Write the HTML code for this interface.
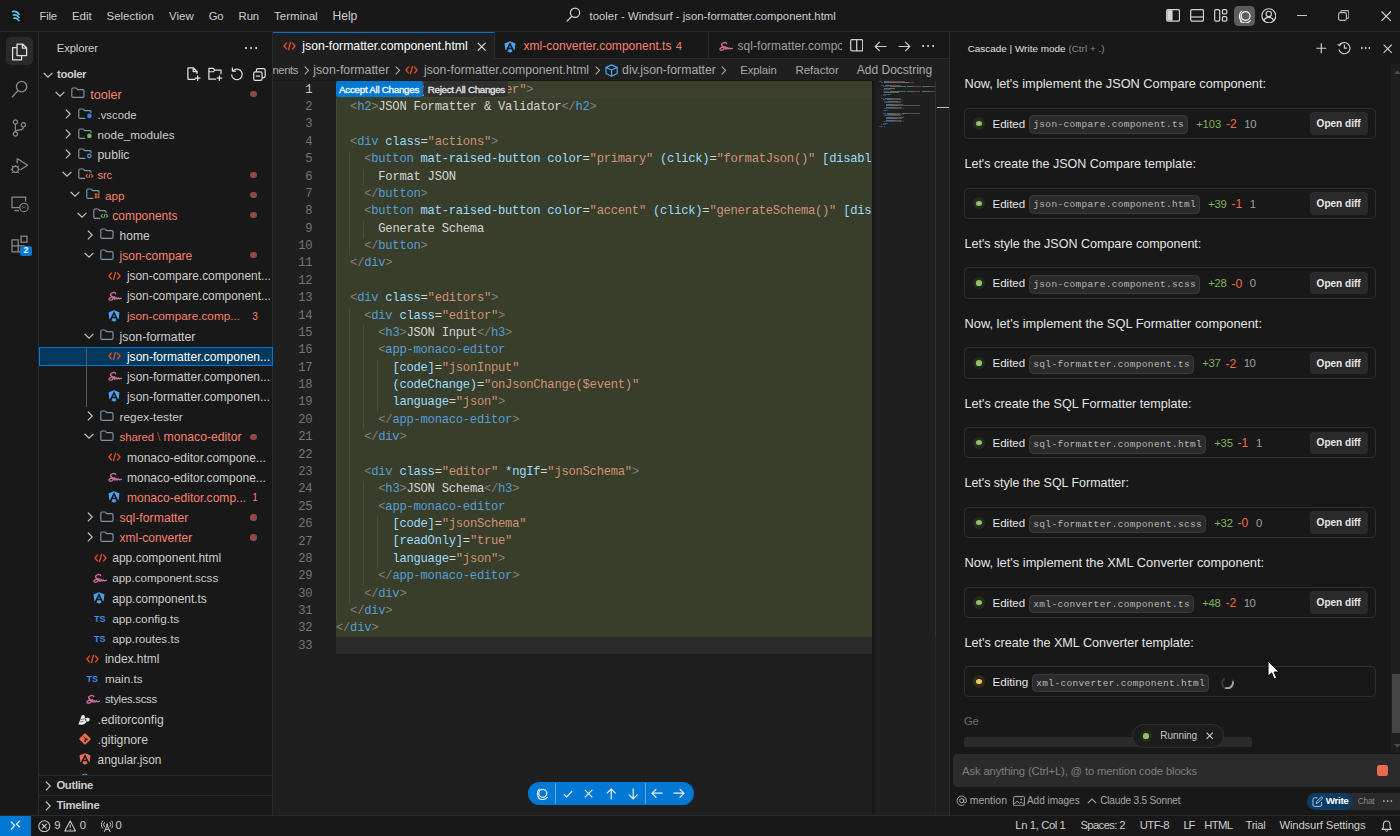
<!DOCTYPE html>
<html lang="en"><head><meta charset="utf-8"><title>tooler - Windsurf - json-formatter.component.html</title>
<style>
html,body{margin:0;padding:0;background:#181818;overflow:hidden}
body{width:1400px;height:836px;position:relative;font-family:"Liberation Sans", sans-serif;font-size:11.9px;color:#ccc}
#app{position:absolute;left:0;top:0;width:1400px;height:836px;overflow:hidden;background:#181818}
#app div,#app span,#app svg{position:absolute;box-sizing:border-box}
#app span{white-space:pre}
#app span span{position:static}
</style></head><body><div id="app">
<section class="workbench-frame" aria-label="Workbench">
<div style="left:0px;top:0px;width:1400px;height:31px;background:#181818;"></div>
<div style="left:0px;top:31px;width:1400px;height:1px;background:#2b2b2b;"></div>
<div style="left:0px;top:32px;width:38px;height:783px;background:#181818;"></div>
<div style="left:38px;top:32px;width:1px;height:783px;background:#2b2b2b;"></div>
<div style="left:39px;top:32px;width:233px;height:783px;background:#181818;"></div>
<div style="left:272px;top:32px;width:1px;height:783px;background:#2b2b2b;"></div>
<div style="left:273px;top:32px;width:676px;height:27px;background:#181818;"></div>
<div style="left:273px;top:58px;width:676px;height:1px;background:#2b2b2b;"></div>
<div style="left:273px;top:59px;width:676px;height:756px;background:#1f1f1f;"></div>
<div style="left:949px;top:32px;width:1px;height:783px;background:#2b2b2b;"></div>
<div style="left:950px;top:32px;width:450px;height:783px;background:#181818;"></div>
<div style="left:0px;top:815px;width:1400px;height:1px;background:#2b2b2b;"></div>
<div style="left:0px;top:816px;width:1400px;height:20px;background:#181818;"></div>
</section>
<header class="titlebar menubar" aria-label="Title bar">
<span style='left:39.6px;top:8px;font-size:11.3px;line-height:16px;color:#cccccc;letter-spacing:-0.253px;'>File</span>
<span style='left:71.9px;top:8px;font-size:11.49px;line-height:16px;color:#cccccc;'>Edit</span>
<span style='left:106.5px;top:8px;font-size:11.51px;line-height:16px;color:#cccccc;'>Selection</span>
<span style='left:169.1px;top:8px;font-size:11.45px;line-height:16px;color:#cccccc;'>View</span>
<span style='left:208.8px;top:8px;font-size:11.3px;line-height:16px;color:#cccccc;letter-spacing:-0.291px;'>Go</span>
<span style='left:238.6px;top:8px;font-size:11.3px;line-height:16px;color:#cccccc;letter-spacing:-0.112px;'>Run</span>
<span style='left:274px;top:8px;font-size:11.57px;line-height:16px;color:#cccccc;'>Terminal</span>
<span style='left:332.5px;top:8px;font-size:12.06px;line-height:16px;color:#cccccc;'>Help</span>
<span style='left:589.6px;top:8px;font-size:11.33px;line-height:16px;color:#cccccc;'>tooler - Windsurf - json-formatter.component.html</span>
</header>
<aside class="sidebar explorer" aria-label="Explorer">
<span style='left:56.8px;top:40px;font-size:11.3px;line-height:16px;color:#cccccc;letter-spacing:-0.133px;'>Explorer</span>
<svg style="left:245.2px;top:46.4px;" width="12.199999999999989" height="4" viewBox="0 0 12.199999999999989 4"><circle cx="1.05" cy="2" r="1.05" fill="#e0e0e0"/><circle cx="6.099999999999994" cy="2" r="1.05" fill="#e0e0e0"/><circle cx="11.149999999999988" cy="2" r="1.05" fill="#e0e0e0"/></svg>
<svg style="left:42.6px;top:71.6px;" width="10.0" height="6.4" viewBox="0 0 10 6.4"><path d="M1 1.2 L5 5.2 L9 1.2" fill="none" stroke="#c5c5c5" stroke-width="1.15" stroke-linecap="square"/></svg>
<span style='left:57.1px;top:66px;font-size:11.3px;line-height:16px;color:#cccccc;font-weight:700;letter-spacing:-0.397px;'>tooler</span>
<div style="left:39px;top:346.5px;width:233.6px;height:19.8px;background:#04395e;border:1px solid #0078d4;"></div>
<div style="left:86.4px;top:346.5px;width:1px;height:60.465px;background:#585858;"></div>
<svg style="left:55.0px;top:90.7px;" width="10.0" height="6.4" viewBox="0 0 10 6.4"><path d="M1 1.2 L5 5.2 L9 1.2" fill="none" stroke="#c5c5c5" stroke-width="1.15" stroke-linecap="square"/></svg>
<svg style="left:71.0px;top:87.4px;" width="16" height="13" viewBox="0 0 16 13"><path d="M2 1 H4.8 Q5.4 1 5.8 1.5 L6.6 2.6 H11.8 Q13 2.6 13 3.8 V9.2 Q13 10.4 11.8 10.4 H2 Q0.8 10.4 0.8 9.2 V2.2 Q0.8 1 2 1 Z" fill="none" stroke="#7c94a8" stroke-width="1.15" stroke-linejoin="round"/></svg>
<span style='left:90.2px;top:87px;font-size:12.64px;line-height:16px;color:#f88070;'>tooler</span>
<div style="left:250.2px;top:90.9px;width:6.4px;height:6.4px;border-radius:50%;background:#8d4a43"></div>
<svg style="left:64.64999999999999px;top:109.055px;" width="6.4" height="10.0" viewBox="0 0 6.4 10"><path d="M1.2 1 L5.2 5 L1.2 9" fill="none" stroke="#c5c5c5" stroke-width="1.15" stroke-linecap="square"/></svg>
<svg style="left:78.35px;top:107.555px;" width="16" height="13" viewBox="0 0 16 13"><path d="M6.8 10.4 H2 Q0.8 10.4 0.8 9.2 V2.2 Q0.8 1 2 1 H4.8 Q5.4 1 5.8 1.5 L6.6 2.6 H11.8 Q13 2.6 13 3.8 V4.6" fill="none" stroke="#7c94a8" stroke-width="1.15" stroke-linejoin="round" stroke-linecap="round"/><circle cx="11.4" cy="7.9" r="2.3" fill="#2f7fe8"/></svg>
<span style='left:97.55px;top:107px;font-size:11.31px;line-height:16px;color:#cccccc;'>.vscode</span>
<svg style="left:64.64999999999999px;top:129.21px;" width="6.4" height="10.0" viewBox="0 0 6.4 10"><path d="M1.2 1 L5.2 5 L1.2 9" fill="none" stroke="#c5c5c5" stroke-width="1.15" stroke-linecap="square"/></svg>
<svg style="left:78.35px;top:127.71000000000001px;" width="16" height="13" viewBox="0 0 16 13"><path d="M6.8 10.4 H2 Q0.8 10.4 0.8 9.2 V2.2 Q0.8 1 2 1 H4.8 Q5.4 1 5.8 1.5 L6.6 2.6 H11.8 Q13 2.6 13 3.8 V4.6" fill="none" stroke="#7c94a8" stroke-width="1.15" stroke-linejoin="round" stroke-linecap="round"/><circle cx="11.4" cy="7.9" r="2.3" fill="#6db35a"/></svg>
<span style='left:97.55px;top:127px;font-size:11.74px;line-height:16px;color:#cccccc;'>node_modules</span>
<svg style="left:64.64999999999999px;top:149.365px;" width="6.4" height="10.0" viewBox="0 0 6.4 10"><path d="M1.2 1 L5.2 5 L1.2 9" fill="none" stroke="#c5c5c5" stroke-width="1.15" stroke-linecap="square"/></svg>
<svg style="left:78.35px;top:147.865px;" width="16" height="13" viewBox="0 0 16 13"><path d="M6.8 10.4 H2 Q0.8 10.4 0.8 9.2 V2.2 Q0.8 1 2 1 H4.8 Q5.4 1 5.8 1.5 L6.6 2.6 H11.8 Q13 2.6 13 3.8 V4.6" fill="none" stroke="#7c94a8" stroke-width="1.15" stroke-linejoin="round" stroke-linecap="round"/><circle cx="11.4" cy="7.9" r="1.7" fill="none" stroke="#5b8df0" stroke-width="1.2"/></svg>
<span style='left:97.55px;top:147px;font-size:12.23px;line-height:16px;color:#cccccc;'>public</span>
<svg style="left:62.349999999999994px;top:171.32000000000002px;" width="10.0" height="6.4" viewBox="0 0 10 6.4"><path d="M1 1.2 L5 5.2 L9 1.2" fill="none" stroke="#c5c5c5" stroke-width="1.15" stroke-linecap="square"/></svg>
<svg style="left:78.35px;top:168.02px;" width="16" height="13" viewBox="0 0 16 13"><path d="M6.8 10.4 H2 Q0.8 10.4 0.8 9.2 V2.2 Q0.8 1 2 1 H4.8 Q5.4 1 5.8 1.5 L6.6 2.6 H11.8 Q13 2.6 13 3.8 V4.6" fill="none" stroke="#7c94a8" stroke-width="1.15" stroke-linejoin="round" stroke-linecap="round"/><path d="M9.6 6.2 L8.1 7.9 L9.6 9.6 M10.9 10 L11.9 5.8 M13.2 6.2 L14.7 7.9 L13.2 9.6" fill="none" stroke="#e8683a" stroke-width="1.05"/></svg>
<span style='left:97.55px;top:167px;font-size:11.3px;line-height:16px;color:#f88070;letter-spacing:-0.205px;'>src</span>
<div style="left:250.2px;top:171.5px;width:6.4px;height:6.4px;border-radius:50%;background:#8d4a43"></div>
<svg style="left:69.7px;top:191.47500000000002px;" width="10.0" height="6.4" viewBox="0 0 10 6.4"><path d="M1 1.2 L5 5.2 L9 1.2" fill="none" stroke="#c5c5c5" stroke-width="1.15" stroke-linecap="square"/></svg>
<svg style="left:85.7px;top:188.175px;" width="16" height="13" viewBox="0 0 16 13"><path d="M6.8 10.4 H2 Q0.8 10.4 0.8 9.2 V2.2 Q0.8 1 2 1 H4.8 Q5.4 1 5.8 1.5 L6.6 2.6 H11.8 Q13 2.6 13 3.8 V4.6" fill="none" stroke="#7c94a8" stroke-width="1.15" stroke-linejoin="round" stroke-linecap="round"/><rect x="8.8" y="5.5" width="2" height="2" fill="#e8683a"/><rect x="11.5" y="5.5" width="2" height="2" fill="#e8683a"/><rect x="8.8" y="8.2" width="2" height="2" fill="#e8683a"/><rect x="11.5" y="8.2" width="2" height="2" fill="#e8683a"/></svg>
<span style='left:104.9px;top:188px;font-size:11.75px;line-height:16px;color:#f88070;'>app</span>
<div style="left:250.2px;top:191.7px;width:6.4px;height:6.4px;border-radius:50%;background:#8d4a43"></div>
<svg style="left:77.05px;top:211.63000000000002px;" width="10.0" height="6.4" viewBox="0 0 10 6.4"><path d="M1 1.2 L5 5.2 L9 1.2" fill="none" stroke="#c5c5c5" stroke-width="1.15" stroke-linecap="square"/></svg>
<svg style="left:93.05px;top:208.33px;" width="16" height="13" viewBox="0 0 16 13"><path d="M6.8 10.4 H2 Q0.8 10.4 0.8 9.2 V2.2 Q0.8 1 2 1 H4.8 Q5.4 1 5.8 1.5 L6.6 2.6 H11.8 Q13 2.6 13 3.8 V4.6" fill="none" stroke="#7c94a8" stroke-width="1.15" stroke-linejoin="round" stroke-linecap="round"/><path d="M9.6 6.2 L8.1 7.9 L9.6 9.6 M10.9 10 L11.9 5.8 M13.2 6.2 L14.7 7.9 L13.2 9.6" fill="none" stroke="#6db35a" stroke-width="1.05"/></svg>
<span style='left:112.25px;top:208px;font-size:12.0px;line-height:16px;color:#f88070;'>components</span>
<div style="left:250.2px;top:211.8px;width:6.4px;height:6.4px;border-radius:50%;background:#8d4a43"></div>
<svg style="left:86.7px;top:229.985px;" width="6.4" height="10.0" viewBox="0 0 6.4 10"><path d="M1.2 1 L5.2 5 L1.2 9" fill="none" stroke="#c5c5c5" stroke-width="1.15" stroke-linecap="square"/></svg>
<svg style="left:100.4px;top:228.485px;" width="16" height="13" viewBox="0 0 16 13"><path d="M2 1 H4.8 Q5.4 1 5.8 1.5 L6.6 2.6 H11.8 Q13 2.6 13 3.8 V9.2 Q13 10.4 11.8 10.4 H2 Q0.8 10.4 0.8 9.2 V2.2 Q0.8 1 2 1 Z" fill="none" stroke="#7c94a8" stroke-width="1.15" stroke-linejoin="round"/></svg>
<span style='left:119.6px;top:228px;font-size:12.04px;line-height:16px;color:#cccccc;'>home</span>
<svg style="left:84.4px;top:251.94000000000003px;" width="10.0" height="6.4" viewBox="0 0 10 6.4"><path d="M1 1.2 L5 5.2 L9 1.2" fill="none" stroke="#c5c5c5" stroke-width="1.15" stroke-linecap="square"/></svg>
<svg style="left:100.4px;top:248.64000000000001px;" width="16" height="13" viewBox="0 0 16 13"><path d="M2 1 H4.8 Q5.4 1 5.8 1.5 L6.6 2.6 H11.8 Q13 2.6 13 3.8 V9.2 Q13 10.4 11.8 10.4 H2 Q0.8 10.4 0.8 9.2 V2.2 Q0.8 1 2 1 Z" fill="none" stroke="#7c94a8" stroke-width="1.15" stroke-linejoin="round"/></svg>
<span style='left:119.6px;top:248px;font-size:11.99px;line-height:16px;color:#f88070;'>json-compare</span>
<div style="left:250.2px;top:252.1px;width:6.4px;height:6.4px;border-radius:50%;background:#8d4a43"></div>
<svg style="left:108.45px;top:270.69500000000005px;" width="13" height="10" viewBox="0 0 13 10"><path d="M3.8 1.6 L1 5 L3.8 8.4 M9.2 1.6 L12 5 L9.2 8.4 M7.6 0.8 L5.4 9.2" fill="none" stroke="#e44d26" stroke-width="1.35"/></svg>
<span style='left:126.95px;top:268px;font-size:11.89px;line-height:16px;color:#cccccc;'>json-compare.component...</span>
<svg style="left:107.65px;top:290.6500000000001px;" width="14.5" height="11" viewBox="0 0 14.5 11"><path d="M7.6 2.6 C7.4 0.6 2.4 1.6 2.6 3.8 C2.8 5.4 5.6 5.6 5.2 7.4 C4.8 9.2 1.4 9.8 1 8.4 C0.6 6.8 4.6 5.6 6.8 6 M6.6 6 C6 7.4 6.6 8.6 7.6 7.8 C8.2 7.2 8.4 6.2 8.4 6.2 C8.2 7.2 8.8 8.2 9.6 7.6 C10.2 7.2 10.4 6.4 10.4 6.4 C10.4 7.4 11 8 11.8 7.6 C12.4 7.4 13 7.2 13.6 7.4" fill="none" stroke="#cf6a9c" stroke-width="1.4" stroke-linecap="round"/></svg>
<span style='left:126.95px;top:288px;font-size:11.89px;line-height:16px;color:#cccccc;'>json-compare.component...</span>
<svg style="left:107.95px;top:309.50500000000005px;" width="12" height="12.4" viewBox="0 0 12 12.4"><path d="M6 0.3 L11.2 2.2 Q11.5 2.3 11.4 2.7 L10.7 8.6 Q10.6 9.1 10.2 9.3 L6.4 11.6 Q6 11.8 5.6 11.6 L1.8 9.3 Q1.4 9.1 1.3 8.6 L0.6 2.7 Q0.5 2.3 0.8 2.2 Z" fill="#4ba3f5"/><path d="M6 0.9 L10.5 10 H8.3 L7.55 8.3 H4.45 L3.7 10 H1.5 Z M6 4.3 L5.1 6.7 H6.9 Z" fill="#181818" fill-rule="evenodd"/></svg>
<span style='left:126.95px;top:308px;font-size:11.77px;line-height:16px;color:#f88070;'>json-compare.comp...</span>
<span style='left:252.3px;top:309px;font-size:10.07px;line-height:16px;color:#f88070;letter-spacing:-0.411px;'>3</span>
<svg style="left:84.4px;top:332.56px;" width="10.0" height="6.4" viewBox="0 0 10 6.4"><path d="M1 1.2 L5 5.2 L9 1.2" fill="none" stroke="#c5c5c5" stroke-width="1.15" stroke-linecap="square"/></svg>
<svg style="left:100.4px;top:329.26px;" width="16" height="13" viewBox="0 0 16 13"><path d="M2 1 H4.8 Q5.4 1 5.8 1.5 L6.6 2.6 H11.8 Q13 2.6 13 3.8 V9.2 Q13 10.4 11.8 10.4 H2 Q0.8 10.4 0.8 9.2 V2.2 Q0.8 1 2 1 Z" fill="none" stroke="#7c94a8" stroke-width="1.15" stroke-linejoin="round"/></svg>
<span style='left:119.6px;top:329px;font-size:12.31px;line-height:16px;color:#cccccc;'>json-formatter</span>
<svg style="left:108.45px;top:351.315px;" width="13" height="10" viewBox="0 0 13 10"><path d="M3.8 1.6 L1 5 L3.8 8.4 M9.2 1.6 L12 5 L9.2 8.4 M7.6 0.8 L5.4 9.2" fill="none" stroke="#e44d26" stroke-width="1.35"/></svg>
<span style='left:126.95px;top:349px;font-size:12.04px;line-height:16px;color:#ffffff;'>json-formatter.componen...</span>
<svg style="left:107.65px;top:371.2700000000001px;" width="14.5" height="11" viewBox="0 0 14.5 11"><path d="M7.6 2.6 C7.4 0.6 2.4 1.6 2.6 3.8 C2.8 5.4 5.6 5.6 5.2 7.4 C4.8 9.2 1.4 9.8 1 8.4 C0.6 6.8 4.6 5.6 6.8 6 M6.6 6 C6 7.4 6.6 8.6 7.6 7.8 C8.2 7.2 8.4 6.2 8.4 6.2 C8.2 7.2 8.8 8.2 9.6 7.6 C10.2 7.2 10.4 6.4 10.4 6.4 C10.4 7.4 11 8 11.8 7.6 C12.4 7.4 13 7.2 13.6 7.4" fill="none" stroke="#cf6a9c" stroke-width="1.4" stroke-linecap="round"/></svg>
<span style='left:126.95px;top:369px;font-size:12.04px;line-height:16px;color:#cccccc;'>json-formatter.componen...</span>
<svg style="left:107.95px;top:390.12500000000006px;" width="12" height="12.4" viewBox="0 0 12 12.4"><path d="M6 0.3 L11.2 2.2 Q11.5 2.3 11.4 2.7 L10.7 8.6 Q10.6 9.1 10.2 9.3 L6.4 11.6 Q6 11.8 5.6 11.6 L1.8 9.3 Q1.4 9.1 1.3 8.6 L0.6 2.7 Q0.5 2.3 0.8 2.2 Z" fill="#4ba3f5"/><path d="M6 0.9 L10.5 10 H8.3 L7.55 8.3 H4.45 L3.7 10 H1.5 Z M6 4.3 L5.1 6.7 H6.9 Z" fill="#181818" fill-rule="evenodd"/></svg>
<span style='left:126.95px;top:389px;font-size:12.04px;line-height:16px;color:#cccccc;'>json-formatter.componen...</span>
<svg style="left:86.7px;top:411.38px;" width="6.4" height="10.0" viewBox="0 0 6.4 10"><path d="M1.2 1 L5.2 5 L1.2 9" fill="none" stroke="#c5c5c5" stroke-width="1.15" stroke-linecap="square"/></svg>
<svg style="left:100.4px;top:409.88px;" width="16" height="13" viewBox="0 0 16 13"><path d="M2 1 H4.8 Q5.4 1 5.8 1.5 L6.6 2.6 H11.8 Q13 2.6 13 3.8 V9.2 Q13 10.4 11.8 10.4 H2 Q0.8 10.4 0.8 9.2 V2.2 Q0.8 1 2 1 Z" fill="none" stroke="#7c94a8" stroke-width="1.15" stroke-linejoin="round"/></svg>
<span style='left:119.6px;top:409px;font-size:11.83px;line-height:16px;color:#cccccc;'>regex-tester</span>
<svg style="left:84.4px;top:433.335px;" width="10.0" height="6.4" viewBox="0 0 10 6.4"><path d="M1 1.2 L5 5.2 L9 1.2" fill="none" stroke="#c5c5c5" stroke-width="1.15" stroke-linecap="square"/></svg>
<svg style="left:100.4px;top:430.03499999999997px;" width="16" height="13" viewBox="0 0 16 13"><path d="M2 1 H4.8 Q5.4 1 5.8 1.5 L6.6 2.6 H11.8 Q13 2.6 13 3.8 V9.2 Q13 10.4 11.8 10.4 H2 Q0.8 10.4 0.8 9.2 V2.2 Q0.8 1 2 1 Z" fill="none" stroke="#7c94a8" stroke-width="1.15" stroke-linejoin="round"/></svg>
<span style='left:119.6px;top:429px;font-size:11.3px;line-height:16px;color:#f88070;letter-spacing:-0.024px;'>shared</span>
<div style="left:250.2px;top:433.5px;width:6.4px;height:6.4px;border-radius:50%;background:#8d4a43"></div>
<svg style="left:108.45px;top:452.0900000000001px;" width="13" height="10" viewBox="0 0 13 10"><path d="M3.8 1.6 L1 5 L3.8 8.4 M9.2 1.6 L12 5 L9.2 8.4 M7.6 0.8 L5.4 9.2" fill="none" stroke="#e44d26" stroke-width="1.35"/></svg>
<span style='left:126.95px;top:450px;font-size:12.02px;line-height:16px;color:#cccccc;'>monaco-editor.compone...</span>
<svg style="left:107.65px;top:472.0450000000001px;" width="14.5" height="11" viewBox="0 0 14.5 11"><path d="M7.6 2.6 C7.4 0.6 2.4 1.6 2.6 3.8 C2.8 5.4 5.6 5.6 5.2 7.4 C4.8 9.2 1.4 9.8 1 8.4 C0.6 6.8 4.6 5.6 6.8 6 M6.6 6 C6 7.4 6.6 8.6 7.6 7.8 C8.2 7.2 8.4 6.2 8.4 6.2 C8.2 7.2 8.8 8.2 9.6 7.6 C10.2 7.2 10.4 6.4 10.4 6.4 C10.4 7.4 11 8 11.8 7.6 C12.4 7.4 13 7.2 13.6 7.4" fill="none" stroke="#cf6a9c" stroke-width="1.4" stroke-linecap="round"/></svg>
<span style='left:126.95px;top:470px;font-size:12.02px;line-height:16px;color:#cccccc;'>monaco-editor.compone...</span>
<svg style="left:107.95px;top:490.90000000000003px;" width="12" height="12.4" viewBox="0 0 12 12.4"><path d="M6 0.3 L11.2 2.2 Q11.5 2.3 11.4 2.7 L10.7 8.6 Q10.6 9.1 10.2 9.3 L6.4 11.6 Q6 11.8 5.6 11.6 L1.8 9.3 Q1.4 9.1 1.3 8.6 L0.6 2.7 Q0.5 2.3 0.8 2.2 Z" fill="#4ba3f5"/><path d="M6 0.9 L10.5 10 H8.3 L7.55 8.3 H4.45 L3.7 10 H1.5 Z M6 4.3 L5.1 6.7 H6.9 Z" fill="#181818" fill-rule="evenodd"/></svg>
<span style='left:126.95px;top:490px;font-size:12.06px;line-height:16px;color:#f88070;'>monaco-editor.comp...</span>
<span style='left:252.3px;top:490px;font-size:10.07px;line-height:16px;color:#f88070;letter-spacing:-0.411px;'>1</span>
<svg style="left:86.7px;top:512.155px;" width="6.4" height="10.0" viewBox="0 0 6.4 10"><path d="M1.2 1 L5.2 5 L1.2 9" fill="none" stroke="#c5c5c5" stroke-width="1.15" stroke-linecap="square"/></svg>
<svg style="left:100.4px;top:510.655px;" width="16" height="13" viewBox="0 0 16 13"><path d="M2 1 H4.8 Q5.4 1 5.8 1.5 L6.6 2.6 H11.8 Q13 2.6 13 3.8 V9.2 Q13 10.4 11.8 10.4 H2 Q0.8 10.4 0.8 9.2 V2.2 Q0.8 1 2 1 Z" fill="none" stroke="#7c94a8" stroke-width="1.15" stroke-linejoin="round"/></svg>
<span style='left:119.6px;top:510px;font-size:12.27px;line-height:16px;color:#f88070;'>sql-formatter</span>
<div style="left:250.2px;top:514.2px;width:6.4px;height:6.4px;border-radius:50%;background:#8d4a43"></div>
<svg style="left:86.7px;top:532.3100000000001px;" width="6.4" height="10.0" viewBox="0 0 6.4 10"><path d="M1.2 1 L5.2 5 L1.2 9" fill="none" stroke="#c5c5c5" stroke-width="1.15" stroke-linecap="square"/></svg>
<svg style="left:100.4px;top:530.8100000000001px;" width="16" height="13" viewBox="0 0 16 13"><path d="M2 1 H4.8 Q5.4 1 5.8 1.5 L6.6 2.6 H11.8 Q13 2.6 13 3.8 V9.2 Q13 10.4 11.8 10.4 H2 Q0.8 10.4 0.8 9.2 V2.2 Q0.8 1 2 1 Z" fill="none" stroke="#7c94a8" stroke-width="1.15" stroke-linejoin="round"/></svg>
<span style='left:119.6px;top:530px;font-size:11.99px;line-height:16px;color:#f88070;'>xml-converter</span>
<div style="left:250.2px;top:534.3px;width:6.4px;height:6.4px;border-radius:50%;background:#8d4a43"></div>
<svg style="left:93.75px;top:552.865px;" width="13" height="10" viewBox="0 0 13 10"><path d="M3.8 1.6 L1 5 L3.8 8.4 M9.2 1.6 L12 5 L9.2 8.4 M7.6 0.8 L5.4 9.2" fill="none" stroke="#e44d26" stroke-width="1.35"/></svg>
<span style='left:112.25px;top:550px;font-size:12.02px;line-height:16px;color:#cccccc;'>app.component.html</span>
<svg style="left:92.95px;top:572.82px;" width="14.5" height="11" viewBox="0 0 14.5 11"><path d="M7.6 2.6 C7.4 0.6 2.4 1.6 2.6 3.8 C2.8 5.4 5.6 5.6 5.2 7.4 C4.8 9.2 1.4 9.8 1 8.4 C0.6 6.8 4.6 5.6 6.8 6 M6.6 6 C6 7.4 6.6 8.6 7.6 7.8 C8.2 7.2 8.4 6.2 8.4 6.2 C8.2 7.2 8.8 8.2 9.6 7.6 C10.2 7.2 10.4 6.4 10.4 6.4 C10.4 7.4 11 8 11.8 7.6 C12.4 7.4 13 7.2 13.6 7.4" fill="none" stroke="#cf6a9c" stroke-width="1.4" stroke-linecap="round"/></svg>
<span style='left:112.25px;top:570px;font-size:11.55px;line-height:16px;color:#cccccc;'>app.component.scss</span>
<svg style="left:93.25px;top:591.675px;" width="12" height="12.4" viewBox="0 0 12 12.4"><path d="M6 0.3 L11.2 2.2 Q11.5 2.3 11.4 2.7 L10.7 8.6 Q10.6 9.1 10.2 9.3 L6.4 11.6 Q6 11.8 5.6 11.6 L1.8 9.3 Q1.4 9.1 1.3 8.6 L0.6 2.7 Q0.5 2.3 0.8 2.2 Z" fill="#4ba3f5"/><path d="M6 0.9 L10.5 10 H8.3 L7.55 8.3 H4.45 L3.7 10 H1.5 Z M6 4.3 L5.1 6.7 H6.9 Z" fill="#181818" fill-rule="evenodd"/></svg>
<span style='left:112.25px;top:591px;font-size:11.9px;line-height:16px;color:#cccccc;'>app.component.ts</span>
<span style='left:93.95px;top:611px;font-size:9.0px;line-height:16px;color:#3b8eea;font-weight:700;'>TS</span>
<span style='left:112.25px;top:611px;font-size:11.81px;line-height:16px;color:#cccccc;'>app.config.ts</span>
<span style='left:93.95px;top:631px;font-size:9.0px;line-height:16px;color:#3b8eea;font-weight:700;'>TS</span>
<span style='left:112.25px;top:631px;font-size:11.64px;line-height:16px;color:#cccccc;'>app.routes.ts</span>
<svg style="left:86.4px;top:653.64px;" width="13" height="10" viewBox="0 0 13 10"><path d="M3.8 1.6 L1 5 L3.8 8.4 M9.2 1.6 L12 5 L9.2 8.4 M7.6 0.8 L5.4 9.2" fill="none" stroke="#e44d26" stroke-width="1.35"/></svg>
<span style='left:104.9px;top:651px;font-size:11.99px;line-height:16px;color:#cccccc;'>index.html</span>
<span style='left:86.60000000000001px;top:671px;font-size:9.0px;line-height:16px;color:#3b8eea;font-weight:700;'>TS</span>
<span style='left:104.9px;top:671px;font-size:11.67px;line-height:16px;color:#cccccc;'>main.ts</span>
<svg style="left:85.60000000000001px;top:693.7500000000001px;" width="14.5" height="11" viewBox="0 0 14.5 11"><path d="M7.6 2.6 C7.4 0.6 2.4 1.6 2.6 3.8 C2.8 5.4 5.6 5.6 5.2 7.4 C4.8 9.2 1.4 9.8 1 8.4 C0.6 6.8 4.6 5.6 6.8 6 M6.6 6 C6 7.4 6.6 8.6 7.6 7.8 C8.2 7.2 8.4 6.2 8.4 6.2 C8.2 7.2 8.8 8.2 9.6 7.6 C10.2 7.2 10.4 6.4 10.4 6.4 C10.4 7.4 11 8 11.8 7.6 C12.4 7.4 13 7.2 13.6 7.4" fill="none" stroke="#cf6a9c" stroke-width="1.4" stroke-linecap="round"/></svg>
<span style='left:104.9px;top:691px;font-size:11.3px;line-height:16px;color:#cccccc;letter-spacing:-0.237px;'>styles.scss</span>
<svg style="left:78.35px;top:713.705px;" width="13" height="12" viewBox="0 0 13 12"><path d="M0.4 10.6 L3.4 2.2 C3.8 0.8 6.2 0.6 6.6 2 L7.2 4.6 C8.6 3.2 11.8 3.8 11.8 5.6 C11.8 7.4 9.6 8 8.4 7.8 C7.6 9.6 5.6 10.8 3.6 10.8 Z" fill="#e9e9e9"/><path d="M2.6 5.6 L7.2 4.8 M1.8 8 L5.6 7.2" stroke="#5a6670" stroke-width="0.8" fill="none"/><path d="M7.4 5 Q7.6 6.8 8.6 7.6" stroke="#333" stroke-width="0.9" fill="none"/></svg>
<span style='left:97.55px;top:712px;font-size:12.15px;line-height:16px;color:#cccccc;'>.editorconfig</span>
<svg style="left:79.15px;top:733.46px;" width="12" height="12" viewBox="0 0 12 12"><rect x="1.7" y="1.7" width="8.6" height="8.6" rx="1" transform="rotate(45 6 6)" fill="#e8694f"/><path d="M4.8 3.6 L7.6 6.4 M6.2 5 V8.4" stroke="#181818" stroke-width="0.9" fill="none"/><circle cx="6.2" cy="8.3" r="0.9" fill="#181818"/><circle cx="7.7" cy="6.4" r="0.9" fill="#181818"/></svg>
<span style='left:97.55px;top:732px;font-size:12.25px;line-height:16px;color:#cccccc;'>.gitignore</span>
<svg style="left:78.55px;top:752.915px;" width="12" height="12.4" viewBox="0 0 12 12.4"><path d="M6 0.3 L11.2 2.2 Q11.5 2.3 11.4 2.7 L10.7 8.6 Q10.6 9.1 10.2 9.3 L6.4 11.6 Q6 11.8 5.6 11.6 L1.8 9.3 Q1.4 9.1 1.3 8.6 L0.6 2.7 Q0.5 2.3 0.8 2.2 Z" fill="#ee6e5c"/><path d="M6 0.9 L10.5 10 H8.3 L7.55 8.3 H4.45 L3.7 10 H1.5 Z M6 4.3 L5.1 6.7 H6.9 Z" fill="#181818" fill-rule="evenodd"/></svg>
<span style='left:97.55px;top:752px;font-size:11.85px;line-height:16px;color:#cccccc;'>angular.json</span>
<span style='left:157px;top:429px;font-size:12.57px;line-height:16px;color:#8d4a43;'>\</span>
<span style='left:163.6px;top:429px;font-size:12.19px;line-height:16px;color:#f88070;'>monaco-editor</span>
<svg style="left:81.4px;top:772.6px;" width="7.4" height="2.6" viewBox="0 0 7.4 2.6"><path d="M0.6 2.6 Q3.7 -0.6 6.8 2.6" fill="none" stroke="#4ba3f5" stroke-width="1.1"/></svg>
<div style="left:39px;top:775px;width:233px;height:1px;background:#2b2b2b;"></div>
<div style="left:39px;top:795px;width:233px;height:1px;background:#2b2b2b;"></div>
<svg style="left:45.0px;top:780.5px;" width="6.4" height="10.0" viewBox="0 0 6.4 10"><path d="M1.2 1 L5.2 5 L1.2 9" fill="none" stroke="#c5c5c5" stroke-width="1.15" stroke-linecap="square"/></svg>
<span style='left:56.4px;top:777px;font-size:11.3px;line-height:16px;color:#cccccc;font-weight:700;letter-spacing:-0.317px;'>Outline</span>
<svg style="left:45.0px;top:800.6px;" width="6.4" height="10.0" viewBox="0 0 6.4 10"><path d="M1.2 1 L5.2 5 L1.2 9" fill="none" stroke="#c5c5c5" stroke-width="1.15" stroke-linecap="square"/></svg>
<span style='left:56.4px;top:797px;font-size:11.3px;line-height:16px;color:#cccccc;font-weight:700;letter-spacing:-0.329px;'>Timeline</span>
</aside>
<main class="editor-group" aria-label="Editor">
<div style="left:273px;top:32px;width:221px;height:27px;background:#1f1f1f;"></div>
<div style="left:273px;top:32px;width:221px;height:1px;background:#0078d4;"></div>
<div style="left:494px;top:32px;width:1px;height:27px;background:#2b2b2b;"></div>
<div style="left:708px;top:32px;width:1px;height:27px;background:#2b2b2b;"></div>
<svg style="left:282.6px;top:41.3px;" width="13" height="10" viewBox="0 0 13 10"><path d="M3.8 1.6 L1 5 L3.8 8.4 M9.2 1.6 L12 5 L9.2 8.4 M7.6 0.8 L5.4 9.2" fill="none" stroke="#e44d26" stroke-width="1.35"/></svg>
<span style='left:302.3px;top:38px;font-size:12.26px;line-height:16px;color:#ffffff;'>json-formatter.component.html</span>
<svg style="left:476.5px;top:41.6px;" width="9.4" height="9.4" viewBox="0 0 9.4 9.4"><path d="M0.8 0.8 L8.6 8.6 M8.6 0.8 L0.8 8.6" stroke="#e0e0e0" stroke-width="1.2" fill="none"/></svg>
<svg style="left:504.3px;top:40.6px;" width="12" height="12.4" viewBox="0 0 12 12.4"><path d="M6 0.3 L11.2 2.2 Q11.5 2.3 11.4 2.7 L10.7 8.6 Q10.6 9.1 10.2 9.3 L6.4 11.6 Q6 11.8 5.6 11.6 L1.8 9.3 Q1.4 9.1 1.3 8.6 L0.6 2.7 Q0.5 2.3 0.8 2.2 Z" fill="#4ba3f5"/><path d="M6 0.9 L10.5 10 H8.3 L7.55 8.3 H4.45 L3.7 10 H1.5 Z M6 4.3 L5.1 6.7 H6.9 Z" fill="#181818" fill-rule="evenodd"/></svg>
<span style='left:523.5px;top:38px;font-size:12.06px;line-height:16px;color:#f88070;'>xml-converter.component.ts</span>
<span style='left:675.7px;top:38px;font-size:11.32px;line-height:16px;color:#f88070;'>4</span>
<svg style="left:719px;top:41.2px;" width="14.5" height="11" viewBox="0 0 14.5 11"><path d="M7.6 2.6 C7.4 0.6 2.4 1.6 2.6 3.8 C2.8 5.4 5.6 5.6 5.2 7.4 C4.8 9.2 1.4 9.8 1 8.4 C0.6 6.8 4.6 5.6 6.8 6 M6.6 6 C6 7.4 6.6 8.6 7.6 7.8 C8.2 7.2 8.4 6.2 8.4 6.2 C8.2 7.2 8.8 8.2 9.6 7.6 C10.2 7.2 10.4 6.4 10.4 6.4 C10.4 7.4 11 8 11.8 7.6 C12.4 7.4 13 7.2 13.6 7.4" fill="none" stroke="#cf6a9c" stroke-width="1.4" stroke-linecap="round"/></svg>
<div style="left:737px;top:36px;width:105.3px;height:21px;overflow:hidden">
<span style='left:0.6px;top:2px;font-size:11.95px;line-height:16px;color:#9d9d9d;letter-spacing:0.05px;'>sql-formatter.component.scss</span>
</div>
<svg style="left:850px;top:39.4px;" width="13.4" height="12.6" viewBox="0 0 13.4 12.6"><rect x="0.7" y="0.7" width="12" height="11.2" rx="1.2" fill="none" stroke="#d0d0d0" stroke-width="1.25"/><path d="M6.7 0.7 V11.9" stroke="#d0d0d0" stroke-width="1.25"/></svg>
<svg style="left:873.6px;top:41px;" width="13" height="11" viewBox="0 0 13 11"><path d="M12.4 5.5 H1.2 M5.8 0.9 L1.2 5.5 L5.8 10.1" fill="none" stroke="#d0d0d0" stroke-width="1.15"/></svg>
<svg style="left:897.8px;top:41px;" width="13" height="11" viewBox="0 0 13 11"><path d="M0.6 5.5 H11.8 M7.2 0.9 L11.8 5.5 L7.2 10.1" fill="none" stroke="#d0d0d0" stroke-width="1.15"/></svg>
<svg style="left:921.8px;top:44.4px;" width="12.200000000000045" height="4" viewBox="0 0 12.200000000000045 4"><circle cx="1.05" cy="2" r="1.05" fill="#d8d8d8"/><circle cx="6.100000000000023" cy="2" r="1.05" fill="#d8d8d8"/><circle cx="11.150000000000045" cy="2" r="1.05" fill="#d8d8d8"/></svg>
<div style="left:273px;top:59px;width:676px;height:21px;overflow:hidden">
<span style='left:-32.5px;top:3px;font-size:11.3px;line-height:16px;color:#a9a9a9;letter-spacing:-0.394px;'>components</span>
</div>
<svg style="left:303.78400000000005px;top:66.19999999999999px;" width="5.632000000000001" height="8.8" viewBox="0 0 6.4 10"><path d="M1.2 1 L5.2 5 L1.2 9" fill="none" stroke="#a9a9a9" stroke-width="1.15" stroke-linecap="square"/></svg>
<span style='left:313.2px;top:62px;font-size:12.34px;line-height:16px;color:#a9a9a9;'>json-formatter</span>
<svg style="left:394.78400000000005px;top:66.19999999999999px;" width="5.632000000000001" height="8.8" viewBox="0 0 6.4 10"><path d="M1.2 1 L5.2 5 L1.2 9" fill="none" stroke="#a9a9a9" stroke-width="1.15" stroke-linecap="square"/></svg>
<svg style="left:405.4px;top:65.4px;" width="13" height="10" viewBox="0 0 13 10"><path d="M3.8 1.6 L1 5 L3.8 8.4 M9.2 1.6 L12 5 L9.2 8.4 M7.6 0.8 L5.4 9.2" fill="none" stroke="#e44d26" stroke-width="1.35"/></svg>
<span style='left:424px;top:62px;font-size:12.23px;line-height:16px;color:#a9a9a9;'>json-formatter.component.html</span>
<svg style="left:594.684px;top:66.19999999999999px;" width="5.632000000000001" height="8.8" viewBox="0 0 6.4 10"><path d="M1.2 1 L5.2 5 L1.2 9" fill="none" stroke="#a9a9a9" stroke-width="1.15" stroke-linecap="square"/></svg>
<svg style="left:605.3px;top:64px;" width="13.2" height="13.2" viewBox="0 0 13.2 13.2"><path d="M6.6 0.9 L12.2 3.4 V9.6 L6.6 12.3 L1 9.6 V3.4 Z M1 3.4 L6.6 6 L12.2 3.4 M6.6 6 V12.3" fill="none" stroke="#4fa6f2" stroke-width="1.15" stroke-linejoin="round"/></svg>
<span style='left:622.1px;top:62px;font-size:12.28px;line-height:16px;color:#a9a9a9;'>div.json-formatter</span>
<svg style="left:720.584px;top:66.19999999999999px;" width="5.632000000000001" height="8.8" viewBox="0 0 6.4 10"><path d="M1.2 1 L5.2 5 L1.2 9" fill="none" stroke="#a9a9a9" stroke-width="1.15" stroke-linecap="square"/></svg>
<span style='left:740.2px;top:62px;font-size:11.3px;line-height:16px;color:#a9a9a9;letter-spacing:-0.093px;'>Explain</span>
<span style='left:795.5px;top:62px;font-size:11.44px;line-height:16px;color:#a9a9a9;'>Refactor</span>
<span style='left:856.8px;top:62px;font-size:12.01px;line-height:16px;color:#a9a9a9;'>Add Docstring</span>
<div style="left:273px;top:80px;width:599px;height:1.2px;background:#181818;"></div>
<div style="left:336px;top:80.5px;width:536px;height:556.3px;background:#393e2a;"></div>
<div style="left:336px;top:80.5px;width:536px;height:17.98px;background:#3b3f2b;border-bottom:1px solid #3f432f;"></div>
<div style="left:336px;top:636.8px;width:536px;height:17.3px;background:#2a2a2a;"></div>
<span style='left:305.35px;top:81.62px;font-family:"Liberation Mono", monospace;font-size:12.2px;letter-spacing:-0.27px;line-height:17px;color:#cccccc'>1</span>
<span style='left:305.35px;top:99.00px;font-family:"Liberation Mono", monospace;font-size:12.2px;letter-spacing:-0.27px;line-height:17px;color:#6e7681'>2</span>
<span style='left:305.35px;top:116.38px;font-family:"Liberation Mono", monospace;font-size:12.2px;letter-spacing:-0.27px;line-height:17px;color:#6e7681'>3</span>
<span style='left:305.35px;top:133.76px;font-family:"Liberation Mono", monospace;font-size:12.2px;letter-spacing:-0.27px;line-height:17px;color:#6e7681'>4</span>
<span style='left:305.35px;top:151.14px;font-family:"Liberation Mono", monospace;font-size:12.2px;letter-spacing:-0.27px;line-height:17px;color:#6e7681'>5</span>
<span style='left:305.35px;top:168.52px;font-family:"Liberation Mono", monospace;font-size:12.2px;letter-spacing:-0.27px;line-height:17px;color:#6e7681'>6</span>
<span style='left:305.35px;top:185.90px;font-family:"Liberation Mono", monospace;font-size:12.2px;letter-spacing:-0.27px;line-height:17px;color:#6e7681'>7</span>
<span style='left:305.35px;top:203.28px;font-family:"Liberation Mono", monospace;font-size:12.2px;letter-spacing:-0.27px;line-height:17px;color:#6e7681'>8</span>
<span style='left:305.35px;top:220.66px;font-family:"Liberation Mono", monospace;font-size:12.2px;letter-spacing:-0.27px;line-height:17px;color:#6e7681'>9</span>
<span style='left:298.30px;top:238.04px;font-family:"Liberation Mono", monospace;font-size:12.2px;letter-spacing:-0.27px;line-height:17px;color:#6e7681'>10</span>
<span style='left:298.30px;top:255.42px;font-family:"Liberation Mono", monospace;font-size:12.2px;letter-spacing:-0.27px;line-height:17px;color:#6e7681'>11</span>
<span style='left:298.30px;top:272.80px;font-family:"Liberation Mono", monospace;font-size:12.2px;letter-spacing:-0.27px;line-height:17px;color:#6e7681'>12</span>
<span style='left:298.30px;top:290.18px;font-family:"Liberation Mono", monospace;font-size:12.2px;letter-spacing:-0.27px;line-height:17px;color:#6e7681'>13</span>
<span style='left:298.30px;top:307.56px;font-family:"Liberation Mono", monospace;font-size:12.2px;letter-spacing:-0.27px;line-height:17px;color:#6e7681'>14</span>
<span style='left:298.30px;top:324.94px;font-family:"Liberation Mono", monospace;font-size:12.2px;letter-spacing:-0.27px;line-height:17px;color:#6e7681'>15</span>
<span style='left:298.30px;top:342.32px;font-family:"Liberation Mono", monospace;font-size:12.2px;letter-spacing:-0.27px;line-height:17px;color:#6e7681'>16</span>
<span style='left:298.30px;top:359.70px;font-family:"Liberation Mono", monospace;font-size:12.2px;letter-spacing:-0.27px;line-height:17px;color:#6e7681'>17</span>
<span style='left:298.30px;top:377.08px;font-family:"Liberation Mono", monospace;font-size:12.2px;letter-spacing:-0.27px;line-height:17px;color:#6e7681'>18</span>
<span style='left:298.30px;top:394.46px;font-family:"Liberation Mono", monospace;font-size:12.2px;letter-spacing:-0.27px;line-height:17px;color:#6e7681'>19</span>
<span style='left:298.30px;top:411.84px;font-family:"Liberation Mono", monospace;font-size:12.2px;letter-spacing:-0.27px;line-height:17px;color:#6e7681'>20</span>
<span style='left:298.30px;top:429.22px;font-family:"Liberation Mono", monospace;font-size:12.2px;letter-spacing:-0.27px;line-height:17px;color:#6e7681'>21</span>
<span style='left:298.30px;top:446.60px;font-family:"Liberation Mono", monospace;font-size:12.2px;letter-spacing:-0.27px;line-height:17px;color:#6e7681'>22</span>
<span style='left:298.30px;top:463.98px;font-family:"Liberation Mono", monospace;font-size:12.2px;letter-spacing:-0.27px;line-height:17px;color:#6e7681'>23</span>
<span style='left:298.30px;top:481.36px;font-family:"Liberation Mono", monospace;font-size:12.2px;letter-spacing:-0.27px;line-height:17px;color:#6e7681'>24</span>
<span style='left:298.30px;top:498.74px;font-family:"Liberation Mono", monospace;font-size:12.2px;letter-spacing:-0.27px;line-height:17px;color:#6e7681'>25</span>
<span style='left:298.30px;top:516.12px;font-family:"Liberation Mono", monospace;font-size:12.2px;letter-spacing:-0.27px;line-height:17px;color:#6e7681'>26</span>
<span style='left:298.30px;top:533.50px;font-family:"Liberation Mono", monospace;font-size:12.2px;letter-spacing:-0.27px;line-height:17px;color:#6e7681'>27</span>
<span style='left:298.30px;top:550.88px;font-family:"Liberation Mono", monospace;font-size:12.2px;letter-spacing:-0.27px;line-height:17px;color:#6e7681'>28</span>
<span style='left:298.30px;top:568.26px;font-family:"Liberation Mono", monospace;font-size:12.2px;letter-spacing:-0.27px;line-height:17px;color:#6e7681'>29</span>
<span style='left:298.30px;top:585.64px;font-family:"Liberation Mono", monospace;font-size:12.2px;letter-spacing:-0.27px;line-height:17px;color:#6e7681'>30</span>
<span style='left:298.30px;top:603.02px;font-family:"Liberation Mono", monospace;font-size:12.2px;letter-spacing:-0.27px;line-height:17px;color:#6e7681'>31</span>
<span style='left:298.30px;top:620.40px;font-family:"Liberation Mono", monospace;font-size:12.2px;letter-spacing:-0.27px;line-height:17px;color:#6e7681'>32</span>
<span style='left:298.30px;top:637.78px;font-family:"Liberation Mono", monospace;font-size:12.2px;letter-spacing:-0.27px;line-height:17px;color:#6e7681'>33</span>
<div style="left:336px;top:81.62px;width:536px;height:573.54px;overflow:hidden">
<div style="left:0px;top:17.38px;width:1px;height:521.4px;background:#45483a;"></div>
<div style="left:13.20px;top:69.5px;width:1px;height:104.3px;background:#4a4d3c"></div>
<div style="left:27.30px;top:86.9px;width:1px;height:17.4px;background:#4a4d3c"></div>
<div style="left:27.30px;top:139.0px;width:1px;height:17.4px;background:#4a4d3c"></div>
<div style="left:13.20px;top:225.9px;width:1px;height:295.5px;background:#4a4d3c"></div>
<div style="left:27.30px;top:243.3px;width:1px;height:104.3px;background:#4a4d3c"></div>
<div style="left:41.40px;top:278.1px;width:1px;height:52.1px;background:#4a4d3c"></div>
<div style="left:27.30px;top:399.7px;width:1px;height:104.3px;background:#4a4d3c"></div>
<div style="left:41.40px;top:434.5px;width:1px;height:52.1px;background:#4a4d3c"></div>
<span style='left:0.00px;top:0.00px;font-family:"Liberation Mono", monospace;font-size:12.2px;letter-spacing:-0.27px;line-height:17px'><span style="color:#808080">&lt;</span><span style="color:#569cd6">div</span><span style="color:#d4d4d4"> </span><span style="color:#9cdcfe">class</span><span style="color:#d4d4d4">=</span><span style="color:#ce9178">&quot;json-formatter&quot;</span><span style="color:#808080">&gt;</span></span>
<span style='left:14.10px;top:17.38px;font-family:"Liberation Mono", monospace;font-size:12.2px;letter-spacing:-0.27px;line-height:17px'><span style="color:#808080">&lt;</span><span style="color:#569cd6">h2</span><span style="color:#808080">&gt;</span><span style="color:#d4d4d4">JSON Formatter &amp; Validator</span><span style="color:#808080">&lt;/</span><span style="color:#569cd6">h2</span><span style="color:#808080">&gt;</span></span>
<span style='left:14.10px;top:52.14px;font-family:"Liberation Mono", monospace;font-size:12.2px;letter-spacing:-0.27px;line-height:17px'><span style="color:#808080">&lt;</span><span style="color:#569cd6">div</span><span style="color:#d4d4d4"> </span><span style="color:#9cdcfe">class</span><span style="color:#d4d4d4">=</span><span style="color:#ce9178">&quot;actions&quot;</span><span style="color:#808080">&gt;</span></span>
<span style='left:28.20px;top:69.52px;font-family:"Liberation Mono", monospace;font-size:12.2px;letter-spacing:-0.27px;line-height:17px'><span style="color:#808080">&lt;</span><span style="color:#569cd6">button</span><span style="color:#d4d4d4"> </span><span style="color:#9cdcfe">mat-raised-button</span><span style="color:#d4d4d4"> </span><span style="color:#9cdcfe">color</span><span style="color:#d4d4d4">=</span><span style="color:#ce9178">&quot;primary&quot;</span><span style="color:#d4d4d4"> </span><span style="color:#9cdcfe">(click)</span><span style="color:#d4d4d4">=</span><span style="color:#ce9178">&quot;formatJson()&quot;</span><span style="color:#d4d4d4"> </span><span style="color:#9cdcfe">[disabled]</span><span style="color:#d4d4d4">=</span><span style="color:#ce9178">&quot;!jsonInput&quot;</span><span style="color:#808080">&gt;</span></span>
<span style='left:42.30px;top:86.90px;font-family:"Liberation Mono", monospace;font-size:12.2px;letter-spacing:-0.27px;line-height:17px'><span style="color:#d4d4d4">Format JSON</span></span>
<span style='left:28.20px;top:104.28px;font-family:"Liberation Mono", monospace;font-size:12.2px;letter-spacing:-0.27px;line-height:17px'><span style="color:#808080">&lt;/</span><span style="color:#569cd6">button</span><span style="color:#808080">&gt;</span></span>
<span style='left:28.20px;top:121.66px;font-family:"Liberation Mono", monospace;font-size:12.2px;letter-spacing:-0.27px;line-height:17px'><span style="color:#808080">&lt;</span><span style="color:#569cd6">button</span><span style="color:#d4d4d4"> </span><span style="color:#9cdcfe">mat-raised-button</span><span style="color:#d4d4d4"> </span><span style="color:#9cdcfe">color</span><span style="color:#d4d4d4">=</span><span style="color:#ce9178">&quot;accent&quot;</span><span style="color:#d4d4d4"> </span><span style="color:#9cdcfe">(click)</span><span style="color:#d4d4d4">=</span><span style="color:#ce9178">&quot;generateSchema()&quot;</span><span style="color:#d4d4d4"> </span><span style="color:#9cdcfe">[disabled]</span><span style="color:#d4d4d4">=</span><span style="color:#ce9178">&quot;!jsonInput&quot;</span><span style="color:#808080">&gt;</span></span>
<span style='left:42.30px;top:139.04px;font-family:"Liberation Mono", monospace;font-size:12.2px;letter-spacing:-0.27px;line-height:17px'><span style="color:#d4d4d4">Generate Schema</span></span>
<span style='left:28.20px;top:156.42px;font-family:"Liberation Mono", monospace;font-size:12.2px;letter-spacing:-0.27px;line-height:17px'><span style="color:#808080">&lt;/</span><span style="color:#569cd6">button</span><span style="color:#808080">&gt;</span></span>
<span style='left:14.10px;top:173.80px;font-family:"Liberation Mono", monospace;font-size:12.2px;letter-spacing:-0.27px;line-height:17px'><span style="color:#808080">&lt;/</span><span style="color:#569cd6">div</span><span style="color:#808080">&gt;</span></span>
<span style='left:14.10px;top:208.56px;font-family:"Liberation Mono", monospace;font-size:12.2px;letter-spacing:-0.27px;line-height:17px'><span style="color:#808080">&lt;</span><span style="color:#569cd6">div</span><span style="color:#d4d4d4"> </span><span style="color:#9cdcfe">class</span><span style="color:#d4d4d4">=</span><span style="color:#ce9178">&quot;editors&quot;</span><span style="color:#808080">&gt;</span></span>
<span style='left:28.20px;top:225.94px;font-family:"Liberation Mono", monospace;font-size:12.2px;letter-spacing:-0.27px;line-height:17px'><span style="color:#808080">&lt;</span><span style="color:#569cd6">div</span><span style="color:#d4d4d4"> </span><span style="color:#9cdcfe">class</span><span style="color:#d4d4d4">=</span><span style="color:#ce9178">&quot;editor&quot;</span><span style="color:#808080">&gt;</span></span>
<span style='left:42.30px;top:243.32px;font-family:"Liberation Mono", monospace;font-size:12.2px;letter-spacing:-0.27px;line-height:17px'><span style="color:#808080">&lt;</span><span style="color:#569cd6">h3</span><span style="color:#808080">&gt;</span><span style="color:#d4d4d4">JSON Input</span><span style="color:#808080">&lt;/</span><span style="color:#569cd6">h3</span><span style="color:#808080">&gt;</span></span>
<span style='left:42.30px;top:260.70px;font-family:"Liberation Mono", monospace;font-size:12.2px;letter-spacing:-0.27px;line-height:17px'><span style="color:#808080">&lt;</span><span style="color:#569cd6">app-monaco-editor</span></span>
<span style='left:56.40px;top:278.08px;font-family:"Liberation Mono", monospace;font-size:12.2px;letter-spacing:-0.27px;line-height:17px'><span style="color:#9cdcfe">[code]</span><span style="color:#d4d4d4">=</span><span style="color:#ce9178">&quot;jsonInput&quot;</span></span>
<span style='left:56.40px;top:295.46px;font-family:"Liberation Mono", monospace;font-size:12.2px;letter-spacing:-0.27px;line-height:17px'><span style="color:#9cdcfe">(codeChange)</span><span style="color:#d4d4d4">=</span><span style="color:#ce9178">&quot;onJsonChange($event)&quot;</span></span>
<span style='left:56.40px;top:312.84px;font-family:"Liberation Mono", monospace;font-size:12.2px;letter-spacing:-0.27px;line-height:17px'><span style="color:#9cdcfe">language</span><span style="color:#d4d4d4">=</span><span style="color:#ce9178">&quot;json&quot;</span><span style="color:#808080">&gt;</span></span>
<span style='left:42.30px;top:330.22px;font-family:"Liberation Mono", monospace;font-size:12.2px;letter-spacing:-0.27px;line-height:17px'><span style="color:#808080">&lt;/</span><span style="color:#569cd6">app-monaco-editor</span><span style="color:#808080">&gt;</span></span>
<span style='left:28.20px;top:347.60px;font-family:"Liberation Mono", monospace;font-size:12.2px;letter-spacing:-0.27px;line-height:17px'><span style="color:#808080">&lt;/</span><span style="color:#569cd6">div</span><span style="color:#808080">&gt;</span></span>
<span style='left:28.20px;top:382.36px;font-family:"Liberation Mono", monospace;font-size:12.2px;letter-spacing:-0.27px;line-height:17px'><span style="color:#808080">&lt;</span><span style="color:#569cd6">div</span><span style="color:#d4d4d4"> </span><span style="color:#9cdcfe">class</span><span style="color:#d4d4d4">=</span><span style="color:#ce9178">&quot;editor&quot;</span><span style="color:#d4d4d4"> </span><span style="color:#9cdcfe">*ngIf</span><span style="color:#d4d4d4">=</span><span style="color:#ce9178">&quot;jsonSchema&quot;</span><span style="color:#808080">&gt;</span></span>
<span style='left:42.30px;top:399.74px;font-family:"Liberation Mono", monospace;font-size:12.2px;letter-spacing:-0.27px;line-height:17px'><span style="color:#808080">&lt;</span><span style="color:#569cd6">h3</span><span style="color:#808080">&gt;</span><span style="color:#d4d4d4">JSON Schema</span><span style="color:#808080">&lt;/</span><span style="color:#569cd6">h3</span><span style="color:#808080">&gt;</span></span>
<span style='left:42.30px;top:417.12px;font-family:"Liberation Mono", monospace;font-size:12.2px;letter-spacing:-0.27px;line-height:17px'><span style="color:#808080">&lt;</span><span style="color:#569cd6">app-monaco-editor</span></span>
<span style='left:56.40px;top:434.50px;font-family:"Liberation Mono", monospace;font-size:12.2px;letter-spacing:-0.27px;line-height:17px'><span style="color:#9cdcfe">[code]</span><span style="color:#d4d4d4">=</span><span style="color:#ce9178">&quot;jsonSchema&quot;</span></span>
<span style='left:56.40px;top:451.88px;font-family:"Liberation Mono", monospace;font-size:12.2px;letter-spacing:-0.27px;line-height:17px'><span style="color:#9cdcfe">[readOnly]</span><span style="color:#d4d4d4">=</span><span style="color:#ce9178">&quot;true&quot;</span></span>
<span style='left:56.40px;top:469.26px;font-family:"Liberation Mono", monospace;font-size:12.2px;letter-spacing:-0.27px;line-height:17px'><span style="color:#9cdcfe">language</span><span style="color:#d4d4d4">=</span><span style="color:#ce9178">&quot;json&quot;</span><span style="color:#808080">&gt;</span></span>
<span style='left:42.30px;top:486.64px;font-family:"Liberation Mono", monospace;font-size:12.2px;letter-spacing:-0.27px;line-height:17px'><span style="color:#808080">&lt;/</span><span style="color:#569cd6">app-monaco-editor</span><span style="color:#808080">&gt;</span></span>
<span style='left:28.20px;top:504.02px;font-family:"Liberation Mono", monospace;font-size:12.2px;letter-spacing:-0.27px;line-height:17px'><span style="color:#808080">&lt;/</span><span style="color:#569cd6">div</span><span style="color:#808080">&gt;</span></span>
<span style='left:14.10px;top:521.40px;font-family:"Liberation Mono", monospace;font-size:12.2px;letter-spacing:-0.27px;line-height:17px'><span style="color:#808080">&lt;/</span><span style="color:#569cd6">div</span><span style="color:#808080">&gt;</span></span>
<span style='left:0.00px;top:538.78px;font-family:"Liberation Mono", monospace;font-size:12.2px;letter-spacing:-0.27px;line-height:17px'><span style="color:#808080">&lt;/</span><span style="color:#569cd6">div</span><span style="color:#808080">&gt;</span></span>
</div>
<div style="left:335.5px;top:81.2px;width:87.3px;height:15.7px;background:#0078d4;border-radius:2.5px;"></div>
<span style='left:339.1px;top:82px;font-size:9.79px;line-height:16px;color:#ffffff;letter-spacing:-0.268px;-webkit-text-stroke:0.3px #fff;'>Accept All Changes</span>
<div style="left:424px;top:81.2px;width:83.6px;height:15.7px;background:#2f2f2f;border-radius:2.5px;"></div>
<span style='left:427.8px;top:82px;font-size:9.79px;line-height:16px;color:#e6e6e6;letter-spacing:-0.309px;-webkit-text-stroke:0.3px #e6e6e6;'>Reject All Changes</span>
<div style="left:872px;top:81px;width:4px;height:734px;background:linear-gradient(90deg,rgba(0,0,0,.32),rgba(0,0,0,0));"></div>
<div style="left:878.7px;top:80.6px;width:0.9px;height:1.1px;background:#808080;opacity:.4"></div>
<div style="left:879.7px;top:80.6px;width:2.8px;height:1.1px;background:#569cd6;opacity:.4"></div>
<div style="left:883.5px;top:80.6px;width:4.8px;height:1.1px;background:#9cdcfe;opacity:.4"></div>
<div style="left:888.2px;top:80.6px;width:0.9px;height:1.1px;background:#d4d4d4;opacity:.4"></div>
<div style="left:889.2px;top:80.6px;width:15.2px;height:1.1px;background:#ce9178;opacity:.4"></div>
<div style="left:904.4px;top:80.6px;width:0.9px;height:1.1px;background:#808080;opacity:.4"></div>
<div style="left:880.6px;top:82.0px;width:0.9px;height:1.1px;background:#808080;opacity:.4"></div>
<div style="left:881.6px;top:82.0px;width:1.9px;height:1.1px;background:#569cd6;opacity:.4"></div>
<div style="left:883.5px;top:82.0px;width:0.9px;height:1.1px;background:#808080;opacity:.4"></div>
<div style="left:884.4px;top:82.0px;width:24.7px;height:1.1px;background:#d4d4d4;opacity:.4"></div>
<div style="left:909.1px;top:82.0px;width:1.9px;height:1.1px;background:#808080;opacity:.4"></div>
<div style="left:911.0px;top:82.0px;width:1.9px;height:1.1px;background:#569cd6;opacity:.4"></div>
<div style="left:912.9px;top:82.0px;width:0.9px;height:1.1px;background:#808080;opacity:.4"></div>
<div style="left:880.6px;top:84.9px;width:0.9px;height:1.1px;background:#808080;opacity:.4"></div>
<div style="left:881.6px;top:84.9px;width:2.8px;height:1.1px;background:#569cd6;opacity:.4"></div>
<div style="left:885.4px;top:84.9px;width:4.8px;height:1.1px;background:#9cdcfe;opacity:.4"></div>
<div style="left:890.1px;top:84.9px;width:0.9px;height:1.1px;background:#d4d4d4;opacity:.4"></div>
<div style="left:891.1px;top:84.9px;width:8.5px;height:1.1px;background:#ce9178;opacity:.4"></div>
<div style="left:899.6px;top:84.9px;width:0.9px;height:1.1px;background:#808080;opacity:.4"></div>
<div style="left:882.5px;top:86.4px;width:0.9px;height:1.1px;background:#808080;opacity:.4"></div>
<div style="left:883.5px;top:86.4px;width:5.7px;height:1.1px;background:#569cd6;opacity:.4"></div>
<div style="left:890.1px;top:86.4px;width:16.1px;height:1.1px;background:#9cdcfe;opacity:.4"></div>
<div style="left:907.2px;top:86.4px;width:4.8px;height:1.1px;background:#9cdcfe;opacity:.4"></div>
<div style="left:912.0px;top:86.4px;width:0.9px;height:1.1px;background:#d4d4d4;opacity:.4"></div>
<div style="left:912.9px;top:86.4px;width:8.5px;height:1.1px;background:#ce9178;opacity:.4"></div>
<div style="left:922.4px;top:86.4px;width:6.6px;height:1.1px;background:#9cdcfe;opacity:.4"></div>
<div style="left:929.1px;top:86.4px;width:0.9px;height:1.1px;background:#d4d4d4;opacity:.4"></div>
<div style="left:930.0px;top:86.4px;width:5.0px;height:1.1px;background:#ce9178;opacity:.4"></div>
<div style="left:884.4px;top:87.8px;width:10.4px;height:1.1px;background:#d4d4d4;opacity:.4"></div>
<div style="left:882.5px;top:89.3px;width:1.9px;height:1.1px;background:#808080;opacity:.4"></div>
<div style="left:884.4px;top:89.3px;width:5.7px;height:1.1px;background:#569cd6;opacity:.4"></div>
<div style="left:890.1px;top:89.3px;width:0.9px;height:1.1px;background:#808080;opacity:.4"></div>
<div style="left:882.5px;top:90.8px;width:0.9px;height:1.1px;background:#808080;opacity:.4"></div>
<div style="left:883.5px;top:90.8px;width:5.7px;height:1.1px;background:#569cd6;opacity:.4"></div>
<div style="left:890.1px;top:90.8px;width:16.1px;height:1.1px;background:#9cdcfe;opacity:.4"></div>
<div style="left:907.2px;top:90.8px;width:4.8px;height:1.1px;background:#9cdcfe;opacity:.4"></div>
<div style="left:912.0px;top:90.8px;width:0.9px;height:1.1px;background:#d4d4d4;opacity:.4"></div>
<div style="left:912.9px;top:90.8px;width:7.6px;height:1.1px;background:#ce9178;opacity:.4"></div>
<div style="left:921.5px;top:90.8px;width:6.6px;height:1.1px;background:#9cdcfe;opacity:.4"></div>
<div style="left:928.1px;top:90.8px;width:0.9px;height:1.1px;background:#d4d4d4;opacity:.4"></div>
<div style="left:929.1px;top:90.8px;width:5.9px;height:1.1px;background:#ce9178;opacity:.4"></div>
<div style="left:884.4px;top:92.2px;width:14.2px;height:1.1px;background:#d4d4d4;opacity:.4"></div>
<div style="left:882.5px;top:93.6px;width:1.9px;height:1.1px;background:#808080;opacity:.4"></div>
<div style="left:884.4px;top:93.6px;width:5.7px;height:1.1px;background:#569cd6;opacity:.4"></div>
<div style="left:890.1px;top:93.6px;width:0.9px;height:1.1px;background:#808080;opacity:.4"></div>
<div style="left:880.6px;top:95.1px;width:1.9px;height:1.1px;background:#808080;opacity:.4"></div>
<div style="left:882.5px;top:95.1px;width:2.8px;height:1.1px;background:#569cd6;opacity:.4"></div>
<div style="left:885.4px;top:95.1px;width:0.9px;height:1.1px;background:#808080;opacity:.4"></div>
<div style="left:880.6px;top:98.0px;width:0.9px;height:1.1px;background:#808080;opacity:.4"></div>
<div style="left:881.6px;top:98.0px;width:2.8px;height:1.1px;background:#569cd6;opacity:.4"></div>
<div style="left:885.4px;top:98.0px;width:4.8px;height:1.1px;background:#9cdcfe;opacity:.4"></div>
<div style="left:890.1px;top:98.0px;width:0.9px;height:1.1px;background:#d4d4d4;opacity:.4"></div>
<div style="left:891.1px;top:98.0px;width:8.5px;height:1.1px;background:#ce9178;opacity:.4"></div>
<div style="left:899.6px;top:98.0px;width:0.9px;height:1.1px;background:#808080;opacity:.4"></div>
<div style="left:882.5px;top:99.4px;width:0.9px;height:1.1px;background:#808080;opacity:.4"></div>
<div style="left:883.5px;top:99.4px;width:2.8px;height:1.1px;background:#569cd6;opacity:.4"></div>
<div style="left:887.3px;top:99.4px;width:4.8px;height:1.1px;background:#9cdcfe;opacity:.4"></div>
<div style="left:892.0px;top:99.4px;width:0.9px;height:1.1px;background:#d4d4d4;opacity:.4"></div>
<div style="left:893.0px;top:99.4px;width:7.6px;height:1.1px;background:#ce9178;opacity:.4"></div>
<div style="left:900.6px;top:99.4px;width:0.9px;height:1.1px;background:#808080;opacity:.4"></div>
<div style="left:884.4px;top:100.9px;width:0.9px;height:1.1px;background:#808080;opacity:.4"></div>
<div style="left:885.4px;top:100.9px;width:1.9px;height:1.1px;background:#569cd6;opacity:.4"></div>
<div style="left:887.3px;top:100.9px;width:0.9px;height:1.1px;background:#808080;opacity:.4"></div>
<div style="left:888.2px;top:100.9px;width:9.5px;height:1.1px;background:#d4d4d4;opacity:.4"></div>
<div style="left:897.7px;top:100.9px;width:1.9px;height:1.1px;background:#808080;opacity:.4"></div>
<div style="left:899.6px;top:100.9px;width:1.9px;height:1.1px;background:#569cd6;opacity:.4"></div>
<div style="left:901.5px;top:100.9px;width:0.9px;height:1.1px;background:#808080;opacity:.4"></div>
<div style="left:884.4px;top:102.3px;width:0.9px;height:1.1px;background:#808080;opacity:.4"></div>
<div style="left:885.4px;top:102.3px;width:16.1px;height:1.1px;background:#569cd6;opacity:.4"></div>
<div style="left:886.3px;top:103.8px;width:5.7px;height:1.1px;background:#9cdcfe;opacity:.4"></div>
<div style="left:892.0px;top:103.8px;width:0.9px;height:1.1px;background:#d4d4d4;opacity:.4"></div>
<div style="left:893.0px;top:103.8px;width:10.4px;height:1.1px;background:#ce9178;opacity:.4"></div>
<div style="left:886.3px;top:105.2px;width:11.4px;height:1.1px;background:#9cdcfe;opacity:.4"></div>
<div style="left:897.7px;top:105.2px;width:0.9px;height:1.1px;background:#d4d4d4;opacity:.4"></div>
<div style="left:898.7px;top:105.2px;width:20.9px;height:1.1px;background:#ce9178;opacity:.4"></div>
<div style="left:886.3px;top:106.7px;width:7.6px;height:1.1px;background:#9cdcfe;opacity:.4"></div>
<div style="left:893.9px;top:106.7px;width:0.9px;height:1.1px;background:#d4d4d4;opacity:.4"></div>
<div style="left:894.9px;top:106.7px;width:5.7px;height:1.1px;background:#ce9178;opacity:.4"></div>
<div style="left:900.6px;top:106.7px;width:0.9px;height:1.1px;background:#808080;opacity:.4"></div>
<div style="left:884.4px;top:108.1px;width:1.9px;height:1.1px;background:#808080;opacity:.4"></div>
<div style="left:886.3px;top:108.1px;width:16.1px;height:1.1px;background:#569cd6;opacity:.4"></div>
<div style="left:902.5px;top:108.1px;width:0.9px;height:1.1px;background:#808080;opacity:.4"></div>
<div style="left:882.5px;top:109.6px;width:1.9px;height:1.1px;background:#808080;opacity:.4"></div>
<div style="left:884.4px;top:109.6px;width:2.8px;height:1.1px;background:#569cd6;opacity:.4"></div>
<div style="left:887.2px;top:109.6px;width:0.9px;height:1.1px;background:#808080;opacity:.4"></div>
<div style="left:882.5px;top:112.5px;width:0.9px;height:1.1px;background:#808080;opacity:.4"></div>
<div style="left:883.5px;top:112.5px;width:2.8px;height:1.1px;background:#569cd6;opacity:.4"></div>
<div style="left:887.3px;top:112.5px;width:4.8px;height:1.1px;background:#9cdcfe;opacity:.4"></div>
<div style="left:892.0px;top:112.5px;width:0.9px;height:1.1px;background:#d4d4d4;opacity:.4"></div>
<div style="left:893.0px;top:112.5px;width:7.6px;height:1.1px;background:#ce9178;opacity:.4"></div>
<div style="left:901.5px;top:112.5px;width:4.8px;height:1.1px;background:#9cdcfe;opacity:.4"></div>
<div style="left:906.3px;top:112.5px;width:0.9px;height:1.1px;background:#d4d4d4;opacity:.4"></div>
<div style="left:907.2px;top:112.5px;width:11.4px;height:1.1px;background:#ce9178;opacity:.4"></div>
<div style="left:918.6px;top:112.5px;width:0.9px;height:1.1px;background:#808080;opacity:.4"></div>
<div style="left:884.4px;top:113.9px;width:0.9px;height:1.1px;background:#808080;opacity:.4"></div>
<div style="left:885.4px;top:113.9px;width:1.9px;height:1.1px;background:#569cd6;opacity:.4"></div>
<div style="left:887.3px;top:113.9px;width:0.9px;height:1.1px;background:#808080;opacity:.4"></div>
<div style="left:888.2px;top:113.9px;width:10.4px;height:1.1px;background:#d4d4d4;opacity:.4"></div>
<div style="left:898.7px;top:113.9px;width:1.9px;height:1.1px;background:#808080;opacity:.4"></div>
<div style="left:900.6px;top:113.9px;width:1.9px;height:1.1px;background:#569cd6;opacity:.4"></div>
<div style="left:902.5px;top:113.9px;width:0.9px;height:1.1px;background:#808080;opacity:.4"></div>
<div style="left:884.4px;top:115.4px;width:0.9px;height:1.1px;background:#808080;opacity:.4"></div>
<div style="left:885.4px;top:115.4px;width:16.1px;height:1.1px;background:#569cd6;opacity:.4"></div>
<div style="left:886.3px;top:116.8px;width:5.7px;height:1.1px;background:#9cdcfe;opacity:.4"></div>
<div style="left:892.0px;top:116.8px;width:0.9px;height:1.1px;background:#d4d4d4;opacity:.4"></div>
<div style="left:893.0px;top:116.8px;width:11.4px;height:1.1px;background:#ce9178;opacity:.4"></div>
<div style="left:886.3px;top:118.3px;width:9.5px;height:1.1px;background:#9cdcfe;opacity:.4"></div>
<div style="left:895.8px;top:118.3px;width:0.9px;height:1.1px;background:#d4d4d4;opacity:.4"></div>
<div style="left:896.8px;top:118.3px;width:5.7px;height:1.1px;background:#ce9178;opacity:.4"></div>
<div style="left:886.3px;top:119.8px;width:7.6px;height:1.1px;background:#9cdcfe;opacity:.4"></div>
<div style="left:893.9px;top:119.8px;width:0.9px;height:1.1px;background:#d4d4d4;opacity:.4"></div>
<div style="left:894.9px;top:119.8px;width:5.7px;height:1.1px;background:#ce9178;opacity:.4"></div>
<div style="left:900.6px;top:119.8px;width:0.9px;height:1.1px;background:#808080;opacity:.4"></div>
<div style="left:884.4px;top:121.2px;width:1.9px;height:1.1px;background:#808080;opacity:.4"></div>
<div style="left:886.3px;top:121.2px;width:16.1px;height:1.1px;background:#569cd6;opacity:.4"></div>
<div style="left:902.5px;top:121.2px;width:0.9px;height:1.1px;background:#808080;opacity:.4"></div>
<div style="left:882.5px;top:122.6px;width:1.9px;height:1.1px;background:#808080;opacity:.4"></div>
<div style="left:884.4px;top:122.6px;width:2.8px;height:1.1px;background:#569cd6;opacity:.4"></div>
<div style="left:887.2px;top:122.6px;width:0.9px;height:1.1px;background:#808080;opacity:.4"></div>
<div style="left:880.6px;top:124.1px;width:1.9px;height:1.1px;background:#808080;opacity:.4"></div>
<div style="left:882.5px;top:124.1px;width:2.8px;height:1.1px;background:#569cd6;opacity:.4"></div>
<div style="left:885.4px;top:124.1px;width:0.9px;height:1.1px;background:#808080;opacity:.4"></div>
<div style="left:878.7px;top:125.5px;width:1.9px;height:1.1px;background:#808080;opacity:.4"></div>
<div style="left:880.6px;top:125.5px;width:2.8px;height:1.1px;background:#569cd6;opacity:.4"></div>
<div style="left:883.5px;top:125.5px;width:0.9px;height:1.1px;background:#808080;opacity:.4"></div>
<div style="left:935px;top:81px;width:1px;height:556px;background:#2b3524;"></div>
<div style="left:935px;top:637px;width:1px;height:178px;background:#252525;"></div>
<div style="left:936.8px;top:106.8px;width:12.2px;height:1.7px;background:#bdbdbd;"></div>
<div style="left:528.3px;top:781.8px;width:165.7px;height:22.8px;background:#0078d4;border-radius:11.4px;"></div>
<div style="left:555.3px;top:782.5px;width:1px;height:21.4px;background:rgba(255,255,255,.35);"></div>
<div style="left:644.6px;top:782.5px;width:1px;height:21.4px;background:rgba(255,255,255,.35);"></div>
<svg style="left:536.2px;top:787.1px;" width="13" height="13" viewBox="0 0 13 13"><circle cx="6.8" cy="6.3" r="4" fill="none" stroke="#f0f0f0" stroke-width="1.25"/><path d="M3.2 2.2 A6 6 0 0 0 3 10.6 M2.2 10.8 A6.2 6.2 0 0 0 11.2 10.4" fill="none" stroke="#f0f0f0" stroke-width="1.1" stroke-linecap="round"/></svg>
<svg style="left:562.6px;top:789.6px;" width="10" height="8" viewBox="0 0 10 8"><path d="M0.8 4.2 L3.6 7 L9.2 1" fill="none" stroke="#f0f0f0" stroke-width="1.1"/></svg>
<svg style="left:584.2px;top:789px;" width="9.2" height="9.2" viewBox="0 0 9.2 9.2"><path d="M0.8 0.8 L8.4 8.4 M8.4 0.8 L0.8 8.4" stroke="#f0f0f0" stroke-width="1.1" fill="none"/></svg>
<svg style="left:606.4px;top:787.6px;" width="10.4" height="12" viewBox="0 0 10.4 12"><path d="M5.2 11.6 V1 M0.8 5.4 L5.2 1 L9.6 5.4" fill="none" stroke="#f0f0f0" stroke-width="1.2"/></svg>
<svg style="left:628.4px;top:787.6px;" width="10.4" height="12" viewBox="0 0 10.4 12"><path d="M5.2 0.4 V11 M0.8 6.6 L5.2 11 L9.6 6.6" fill="none" stroke="#f0f0f0" stroke-width="1.2"/></svg>
<svg style="left:650.8px;top:788.4px;" width="12" height="10.4" viewBox="0 0 12 10.4"><path d="M11.6 5.2 H1 M5.4 0.8 L1 5.2 L5.4 9.6" fill="none" stroke="#f0f0f0" stroke-width="1.2"/></svg>
<svg style="left:672.8px;top:788.4px;" width="12" height="10.4" viewBox="0 0 12 10.4"><path d="M0.4 5.2 H11 M6.6 0.8 L11 5.2 L6.6 9.6" fill="none" stroke="#f0f0f0" stroke-width="1.2"/></svg>
</main>
<aside class="cascade-panel" aria-label="Cascade">
<span style='left:967.7px;top:41px;font-size:9.94px;line-height:16px;color:#e0e0e0;'>Cascade | Write mode</span>
<span style='left:1068.4px;top:41px;font-size:9.93px;line-height:16px;color:#8a8a8a;'>(Ctrl + .)</span>
<svg style="left:1316.4px;top:43px;" width="10.6" height="10.6" viewBox="0 0 10.6 10.6"><path d="M5.3 0.3 V10.3 M0.3 5.3 H10.3" stroke="#d0d0d0" stroke-width="1.15" fill="none"/></svg>
<svg style="left:1336.6px;top:41.4px;" width="14" height="13.6" viewBox="0 0 14 13.6"><path d="M2.6 4.2 A5.6 5.6 0 1 1 1.9 8.4" fill="none" stroke="#d0d0d0" stroke-width="1.15"/><path d="M0.6 3.6 L2.7 4.6 L3.6 2.3" fill="none" stroke="#d0d0d0" stroke-width="1.1"/><path d="M7.4 3.8 V7.2 H10" fill="none" stroke="#d0d0d0" stroke-width="1.15"/></svg>
<svg style="left:1360.6px;top:46.2px;" width="9.400000000000091" height="4" viewBox="0 0 9.400000000000091 4"><circle cx="0.9" cy="2" r="0.9" fill="#d8d8d8"/><circle cx="4.7000000000000455" cy="2" r="0.9" fill="#d8d8d8"/><circle cx="8.50000000000009" cy="2" r="0.9" fill="#d8d8d8"/></svg>
<svg style="left:1382.8px;top:43.6px;" width="9.4" height="9.4" viewBox="0 0 9.4 9.4"><path d="M0.6 0.6 L8.8 8.8 M8.8 0.6 L0.6 8.8" stroke="#d0d0d0" stroke-width="1.15" fill="none"/></svg>
<div style="left:1391px;top:64px;width:9px;height:689px;background:#1e1e1e;"></div>
<svg style="left:1394px;top:70px;" width="6" height="4" viewBox="0 0 6 4"><path d="M0 4 L3.4 0.2 L6 3 V4 Z" fill="#4a4a4a"/></svg>
<svg style="left:1394px;top:744px;" width="6" height="4" viewBox="0 0 6 4"><path d="M0 0 L3.4 3.8 L6 1 V0 Z" fill="#4a4a4a"/></svg>
<div style="left:1392px;top:674px;width:8px;height:59px;background:#464646;"></div>
<span style='left:964.5px;top:75px;font-size:12.75px;line-height:18px;color:#e4e4e4;'>Now, let&#x27;s implement the JSON Compare component:</span>
<div style="left:964px;top:107.7px;width:412px;height:31.3px;background:#181818;border:1px solid #303030;border-radius:4.5px;"></div>
<div style="left:972.7px;top:117.2px;width:12.4px;height:12.4px;border-radius:50%;background:#222a1c"></div>
<div style="left:975.8px;top:120.8px;width:6.2px;height:5.4px;border-radius:50%;background:#8cc26a"></div>
<span style='left:992.5px;top:116px;font-size:11.54px;line-height:16px;color:#e4e4e4;'>Edited</span>
<div style="left:1029.3px;top:115.4px;width:158.35px;height:18.8px;background:#2b2b2b;border:1px solid #3a3a3a;border-radius:4.5px;"></div>
<span style='left:1033.3px;top:117px;font-size:9.5px;line-height:16px;color:#b8b8b8;font-family:"Liberation Mono", monospace;letter-spacing:0.329px;'>json-compare.component.ts</span>
<span style='left:1196.1499999999999px;top:116px;font-size:11.3px;line-height:16px;color:#7eb55c;letter-spacing:-0.114px;'>+103</span>
<span style='left:1225.9499999999998px;top:116px;font-size:12.15px;line-height:16px;color:#f3694a;'>-2</span>
<span style='left:1244.35px;top:116px;font-size:11.3px;line-height:16px;color:#a0a0a0;letter-spacing:-0.486px;'>10</span>
<div style="left:1310px;top:112.2px;width:58px;height:22.5px;background:#2a2a2a;border-radius:4px;"></div>
<span style='left:1316.6px;top:116px;font-size:10.07px;line-height:16px;color:#e8e8e8;font-weight:700;letter-spacing:-0.019px;'>Open diff</span>
<span style='left:964.5px;top:155px;font-size:12.49px;line-height:18px;color:#e4e4e4;'>Let&#x27;s create the JSON Compare template:</span>
<div style="left:964px;top:187.55px;width:412px;height:31.3px;background:#181818;border:1px solid #303030;border-radius:4.5px;"></div>
<div style="left:972.7px;top:197.1px;width:12.4px;height:12.4px;border-radius:50%;background:#222a1c"></div>
<div style="left:975.8px;top:200.6px;width:6.2px;height:5.4px;border-radius:50%;background:#8cc26a"></div>
<span style='left:992.5px;top:196px;font-size:11.54px;line-height:16px;color:#e4e4e4;'>Edited</span>
<div style="left:1029.3px;top:195.25px;width:170.41px;height:18.8px;background:#2b2b2b;border:1px solid #3a3a3a;border-radius:4.5px;"></div>
<span style='left:1033.3px;top:197px;font-size:9.5px;line-height:16px;color:#b8b8b8;font-family:"Liberation Mono", monospace;letter-spacing:0.329px;'>json-compare.component.html</span>
<span style='left:1208.21px;top:196px;font-size:11.3px;line-height:16px;color:#7eb55c;letter-spacing:-0.238px;'>+39</span>
<span style='left:1231.46px;top:196px;font-size:12.15px;line-height:16px;color:#f3694a;'>-1</span>
<span style='left:1249.8600000000001px;top:196px;font-size:11.3px;line-height:16px;color:#a0a0a0;letter-spacing:-0.994px;'>1</span>
<div style="left:1310px;top:192.05px;width:58px;height:22.5px;background:#2a2a2a;border-radius:4px;"></div>
<span style='left:1316.6px;top:196px;font-size:10.07px;line-height:16px;color:#e8e8e8;font-weight:700;letter-spacing:-0.019px;'>Open diff</span>
<span style='left:964.5px;top:235px;font-size:12.53px;line-height:18px;color:#e4e4e4;'>Let&#x27;s style the JSON Compare component:</span>
<div style="left:964px;top:267.4px;width:412px;height:31.3px;background:#181818;border:1px solid #303030;border-radius:4.5px;"></div>
<div style="left:972.7px;top:276.9px;width:12.4px;height:12.4px;border-radius:50%;background:#222a1c"></div>
<div style="left:975.8px;top:280.4px;width:6.2px;height:5.4px;border-radius:50%;background:#8cc26a"></div>
<span style='left:992.5px;top:275px;font-size:11.54px;line-height:16px;color:#e4e4e4;'>Edited</span>
<div style="left:1029.3px;top:275.09999999999997px;width:170.41px;height:18.8px;background:#2b2b2b;border:1px solid #3a3a3a;border-radius:4.5px;"></div>
<span style='left:1033.3px;top:277px;font-size:9.5px;line-height:16px;color:#b8b8b8;font-family:"Liberation Mono", monospace;letter-spacing:0.329px;'>json-compare.component.scss</span>
<span style='left:1208.21px;top:275px;font-size:11.3px;line-height:16px;color:#7eb55c;letter-spacing:-0.238px;'>+28</span>
<span style='left:1231.46px;top:276px;font-size:12.15px;line-height:16px;color:#f3694a;'>-0</span>
<span style='left:1249.8600000000001px;top:275px;font-size:11.3px;line-height:16px;color:#a0a0a0;letter-spacing:-0.994px;'>0</span>
<div style="left:1310px;top:271.9px;width:58px;height:22.5px;background:#2a2a2a;border-radius:4px;"></div>
<span style='left:1316.6px;top:276px;font-size:10.07px;line-height:16px;color:#e8e8e8;font-weight:700;letter-spacing:-0.019px;'>Open diff</span>
<span style='left:964.5px;top:315px;font-size:12.85px;line-height:18px;color:#e4e4e4;'>Now, let&#x27;s implement the SQL Formatter component:</span>
<div style="left:964px;top:347.25px;width:412px;height:31.3px;background:#181818;border:1px solid #303030;border-radius:4.5px;"></div>
<div style="left:972.7px;top:356.8px;width:12.4px;height:12.4px;border-radius:50%;background:#222a1c"></div>
<div style="left:975.8px;top:360.3px;width:6.2px;height:5.4px;border-radius:50%;background:#8cc26a"></div>
<span style='left:992.5px;top:355px;font-size:11.54px;line-height:16px;color:#e4e4e4;'>Edited</span>
<div style="left:1029.3px;top:354.95px;width:164.38px;height:18.8px;background:#2b2b2b;border:1px solid #3a3a3a;border-radius:4.5px;"></div>
<span style='left:1033.3px;top:357px;font-size:9.5px;line-height:16px;color:#b8b8b8;font-family:"Liberation Mono", monospace;letter-spacing:0.329px;'>sql-formatter.component.ts</span>
<span style='left:1202.1799999999998px;top:355px;font-size:11.3px;line-height:16px;color:#7eb55c;letter-spacing:-0.238px;'>+37</span>
<span style='left:1225.4299999999998px;top:356px;font-size:12.15px;line-height:16px;color:#f3694a;'>-2</span>
<span style='left:1243.83px;top:355px;font-size:11.3px;line-height:16px;color:#a0a0a0;letter-spacing:-0.486px;'>10</span>
<div style="left:1310px;top:351.75px;width:58px;height:22.5px;background:#2a2a2a;border-radius:4px;"></div>
<span style='left:1316.6px;top:356px;font-size:10.07px;line-height:16px;color:#e8e8e8;font-weight:700;letter-spacing:-0.019px;'>Open diff</span>
<span style='left:964.5px;top:395px;font-size:12.58px;line-height:18px;color:#e4e4e4;'>Let&#x27;s create the SQL Formatter template:</span>
<div style="left:964px;top:427.09999999999997px;width:412px;height:31.3px;background:#181818;border:1px solid #303030;border-radius:4.5px;"></div>
<div style="left:972.7px;top:436.6px;width:12.4px;height:12.4px;border-radius:50%;background:#222a1c"></div>
<div style="left:975.8px;top:440.1px;width:6.2px;height:5.4px;border-radius:50%;background:#8cc26a"></div>
<span style='left:992.5px;top:435px;font-size:11.54px;line-height:16px;color:#e4e4e4;'>Edited</span>
<div style="left:1029.3px;top:434.79999999999995px;width:176.44px;height:18.8px;background:#2b2b2b;border:1px solid #3a3a3a;border-radius:4.5px;"></div>
<span style='left:1033.3px;top:437px;font-size:9.5px;line-height:16px;color:#b8b8b8;font-family:"Liberation Mono", monospace;letter-spacing:0.329px;'>sql-formatter.component.html</span>
<span style='left:1214.24px;top:435px;font-size:11.3px;line-height:16px;color:#7eb55c;letter-spacing:-0.238px;'>+35</span>
<span style='left:1237.49px;top:435px;font-size:12.15px;line-height:16px;color:#f3694a;'>-1</span>
<span style='left:1255.89px;top:435px;font-size:11.3px;line-height:16px;color:#a0a0a0;letter-spacing:-0.994px;'>1</span>
<div style="left:1310px;top:431.59999999999997px;width:58px;height:22.5px;background:#2a2a2a;border-radius:4px;"></div>
<span style='left:1316.6px;top:435px;font-size:10.07px;line-height:16px;color:#e8e8e8;font-weight:700;letter-spacing:-0.019px;'>Open diff</span>
<span style='left:964.5px;top:474px;font-size:12.45px;line-height:18px;color:#e4e4e4;'>Let&#x27;s style the SQL Formatter:</span>
<div style="left:964px;top:506.95px;width:412px;height:31.3px;background:#181818;border:1px solid #303030;border-radius:4.5px;"></div>
<div style="left:972.7px;top:516.5px;width:12.4px;height:12.4px;border-radius:50%;background:#222a1c"></div>
<div style="left:975.8px;top:520.0px;width:6.2px;height:5.4px;border-radius:50%;background:#8cc26a"></div>
<span style='left:992.5px;top:515px;font-size:11.54px;line-height:16px;color:#e4e4e4;'>Edited</span>
<div style="left:1029.3px;top:514.6500000000001px;width:176.44px;height:18.8px;background:#2b2b2b;border:1px solid #3a3a3a;border-radius:4.5px;"></div>
<span style='left:1033.3px;top:517px;font-size:9.5px;line-height:16px;color:#b8b8b8;font-family:"Liberation Mono", monospace;letter-spacing:0.329px;'>sql-formatter.component.scss</span>
<span style='left:1214.24px;top:515px;font-size:11.3px;line-height:16px;color:#7eb55c;letter-spacing:-0.238px;'>+32</span>
<span style='left:1237.49px;top:515px;font-size:12.15px;line-height:16px;color:#f3694a;'>-0</span>
<span style='left:1255.89px;top:515px;font-size:11.3px;line-height:16px;color:#a0a0a0;letter-spacing:-0.994px;'>0</span>
<div style="left:1310px;top:511.45px;width:58px;height:22.5px;background:#2a2a2a;border-radius:4px;"></div>
<span style='left:1316.6px;top:515px;font-size:10.07px;line-height:16px;color:#e8e8e8;font-weight:700;letter-spacing:-0.019px;'>Open diff</span>
<span style='left:964.5px;top:554px;font-size:12.89px;line-height:18px;color:#e4e4e4;'>Now, let&#x27;s implement the XML Converter component:</span>
<div style="left:964px;top:586.8px;width:412px;height:31.3px;background:#181818;border:1px solid #303030;border-radius:4.5px;"></div>
<div style="left:972.7px;top:596.3px;width:12.4px;height:12.4px;border-radius:50%;background:#222a1c"></div>
<div style="left:975.8px;top:599.8px;width:6.2px;height:5.4px;border-radius:50%;background:#8cc26a"></div>
<span style='left:992.5px;top:595px;font-size:11.54px;line-height:16px;color:#e4e4e4;'>Edited</span>
<div style="left:1029.3px;top:594.5px;width:164.38px;height:18.8px;background:#2b2b2b;border:1px solid #3a3a3a;border-radius:4.5px;"></div>
<span style='left:1033.3px;top:597px;font-size:9.5px;line-height:16px;color:#b8b8b8;font-family:"Liberation Mono", monospace;letter-spacing:0.329px;'>xml-converter.component.ts</span>
<span style='left:1202.1799999999998px;top:595px;font-size:11.3px;line-height:16px;color:#7eb55c;letter-spacing:-0.238px;'>+48</span>
<span style='left:1225.4299999999998px;top:595px;font-size:12.15px;line-height:16px;color:#f3694a;'>-2</span>
<span style='left:1243.83px;top:595px;font-size:11.3px;line-height:16px;color:#a0a0a0;letter-spacing:-0.486px;'>10</span>
<div style="left:1310px;top:591.3px;width:58px;height:22.5px;background:#2a2a2a;border-radius:4px;"></div>
<span style='left:1316.6px;top:595px;font-size:10.07px;line-height:16px;color:#e8e8e8;font-weight:700;letter-spacing:-0.019px;'>Open diff</span>
<span style='left:964.5px;top:634px;font-size:12.64px;line-height:18px;color:#e4e4e4;'>Let&#x27;s create the XML Converter template:</span>
<div style="left:964px;top:666.3px;width:412px;height:30.3px;background:#181818;border:1px solid #303030;border-radius:4.5px;"></div>
<div style="left:972.5px;top:675.3px;width:12.4px;height:12.4px;border-radius:50%;background:#2f2a17"></div>
<div style="left:975.6px;top:678.8px;width:6.2px;height:5.4px;border-radius:50%;background:#f0c85a"></div>
<span style='left:992.5px;top:674px;font-size:11.68px;line-height:16px;color:#e4e4e4;'>Editing</span>
<div style="left:1032.3px;top:673.5px;width:176.44px;height:18.8px;background:#2b2b2b;border:1px solid #3a3a3a;border-radius:4.5px;"></div>
<span style='left:1036.3px;top:676px;font-size:9.5px;line-height:16px;color:#b8b8b8;font-family:"Liberation Mono", monospace;letter-spacing:0.329px;'>xml-converter.component.html</span>
<svg style="left:1220.6px;top:675.6999999999999px;" width="13.6" height="13.6" viewBox="0 0 13.6 13.6"><path d="M11.6 4.4 A5.6 5.6 0 1 1 3 3" fill="none" stroke="#3c3c3c" stroke-width="1.9" stroke-linecap="round"/><path d="M11.9 6.2 A5.6 5.6 0 0 1 5 12.1" fill="none" stroke="#a8a8a8" stroke-width="1.9" stroke-linecap="round"/></svg>
<span style='left:964.1px;top:713px;font-size:11.3px;line-height:16px;color:#6e6e6e;letter-spacing:-0.291px;'>Ge</span>
<div style="left:964px;top:736.7px;width:288px;height:10.6px;background:#2b2b2b;border-radius:2px;"></div>
<div style="left:964px;top:753.6px;width:200px;height:3px;background:#262626;border-radius:2px 2px 0 0;"></div>
<div style="left:1131.5px;top:724.1px;width:92px;height:23.5px;background:#1c1c1c;border:1px solid #303030;border-radius:11.8px;"></div>
<div style="left:1139.5px;top:729.8px;width:12.4px;height:12.4px;border-radius:50%;background:#242c1d"></div>
<div style="left:1142.6px;top:733.3px;width:6.2px;height:5.4px;border-radius:50%;background:#8cc26a"></div>
<span style='left:1160.3px;top:728px;font-size:10.07px;line-height:16px;color:#c4c4c4;letter-spacing:-0.114px;'>Running</span>
<svg style="left:1206.2px;top:732.4px;" width="7.4" height="7.4" viewBox="0 0 7.4 7.4"><path d="M0.6 0.6 L6.8 6.8 M6.8 0.6 L0.6 6.8" stroke="#d0d0d0" stroke-width="1.1" fill="none"/></svg>
<div style="left:952.5px;top:754.2px;width:447.5px;height:32.6px;background:#2b2b2b;border-radius:5px 0 0 5px;"></div>
<span style='left:962.1px;top:763px;font-size:11.3px;line-height:16px;color:#7d7d7d;letter-spacing:-0.155px;'>Ask anything (Ctrl+L), @ to mention code blocks</span>
<div style="left:1376.6px;top:764.8px;width:11.6px;height:11.6px;background:#ea6a50;border-radius:2.2px;"></div>
<svg style="left:956.4px;top:795.4px;" width="11.4" height="11.4" viewBox="0 0 11.4 11.4"><circle cx="5.7" cy="5.7" r="2.1" fill="none" stroke="#a6a6a6" stroke-width="1"/><path d="M7.8 3.6 V6.6 Q7.8 7.9 9 7.9 Q10.4 7.9 10.4 5.7 A4.7 4.7 0 1 0 8.4 9.6" fill="none" stroke="#a6a6a6" stroke-width="1"/></svg>
<span style='left:969.7px;top:793px;font-size:10.49px;line-height:16px;color:#a6a6a6;'>mention</span>
<svg style="left:1013.2px;top:795.8px;" width="12" height="10.4" viewBox="0 0 12 10.4"><rect x="0.6" y="0.6" width="10.8" height="9.2" rx="1" fill="none" stroke="#a6a6a6" stroke-width="1"/><path d="M0.8 8.4 L4.2 5 L6.6 7.4 L8.2 6 L11.2 8.8" fill="none" stroke="#a6a6a6" stroke-width="0.95"/><circle cx="8.2" cy="3.4" r="0.9" fill="#a6a6a6"/></svg>
<span style='left:1026.9px;top:793px;font-size:10.07px;line-height:16px;color:#a6a6a6;letter-spacing:-0.036px;'>Add images</span>
<svg style="left:1086.6px;top:797.6px;" width="10" height="6" viewBox="0 0 10 6"><path d="M0.8 5.2 L5 1 L9.2 5.2" fill="none" stroke="#a6a6a6" stroke-width="1.1"/></svg>
<span style='left:1100.2px;top:793px;font-size:10.07px;line-height:16px;color:#a6a6a6;letter-spacing:-0.187px;'>Claude 3.5 Sonnet</span>
<div style="left:1306.6px;top:792.6px;width:100px;height:17.6px;background:#2a2a2a;border-radius:8.8px;"></div>
<div style="left:1306.6px;top:792.6px;width:46.6px;height:17.6px;background:#0e3b61;border-radius:8.8px;"></div>
<svg style="left:1311.8px;top:795.6px;" width="11.4" height="11.4" viewBox="0 0 11.4 11.4"><path d="M5.4 1.8 H2.4 Q1 1.8 1 3.2 V9 Q1 10.4 2.4 10.4 H8.2 Q9.6 10.4 9.6 9 V6" fill="none" stroke="#a8d0f2" stroke-width="0.95"/><path d="M4.2 7.4 L4.6 5.6 L9 1.2 Q9.6 0.7 10.2 1.3 Q10.8 1.9 10.2 2.5 L5.9 6.9 Z" fill="none" stroke="#a8d0f2" stroke-width="0.95" stroke-linejoin="round"/></svg>
<span style='left:1325.7px;top:793px;font-size:9.88px;line-height:16px;color:#ffffff;font-weight:700;letter-spacing:-0.341px;'>Write</span>
<span style='left:1357.8px;top:793px;font-size:8.46px;line-height:16px;color:#858585;letter-spacing:-0.328px;'>Chat</span>
<svg style="left:1383.4px;top:799px;" width="9.199999999999818" height="4" viewBox="0 0 9.199999999999818 4"><circle cx="0.85" cy="2" r="0.85" fill="#c8c8c8"/><circle cx="4.599999999999909" cy="2" r="0.85" fill="#c8c8c8"/><circle cx="8.349999999999818" cy="2" r="0.85" fill="#c8c8c8"/></svg>
<svg style="left:1266.6px;top:660px;" width="13" height="21" viewBox="0 0 13 21"><path d="M1 1 V16.2 L4.6 12.9 L7.1 18.9 L9.6 17.8 L7.1 12 H12 Z" fill="#ffffff" stroke="#000000" stroke-width="1" stroke-linejoin="round"/></svg>
</aside>
<footer class="statusbar" aria-label="Status bar">
<div style="left:0px;top:816px;width:31.4px;height:20px;background:#0078d4;"></div>
<svg style="left:10.4px;top:820.4px;" width="11" height="11.6" viewBox="0 0 11 11.6"><path d="M1 1.6 L4.6 5.6 L1 9.6 M9.8 0.8 L6.6 4.2 L9.8 7.2" fill="none" stroke="#ffffff" stroke-width="1.2"/></svg>
<svg style="left:38.4px;top:819.6px;" width="12.6" height="12.6" viewBox="0 0 12.6 12.6"><circle cx="6.3" cy="6.3" r="5.5" fill="none" stroke="#cccccc" stroke-width="1.05"/><path d="M3.9 3.9 L8.7 8.7 M8.7 3.9 L3.9 8.7" stroke="#cccccc" stroke-width="1.05"/></svg>
<span style='left:54.3px;top:817px;font-size:11.3px;line-height:16px;color:#cccccc;letter-spacing:-0.194px;'>9</span>
<svg style="left:63.8px;top:819.8px;" width="12.4" height="12" viewBox="0 0 12.4 12"><path d="M6.2 1 L11.6 11 H0.8 Z" fill="none" stroke="#cccccc" stroke-width="1.05" stroke-linejoin="round"/><path d="M6.2 4.6 V7.8 M6.2 8.8 V9.9" stroke="#cccccc" stroke-width="1"/></svg>
<span style='left:79.7px;top:817px;font-size:11.3px;line-height:16px;color:#cccccc;letter-spacing:-0.194px;'>0</span>
<svg style="left:100.6px;top:819.6px;" width="12.4" height="12.4" viewBox="0 0 12.4 12.4"><path d="M6.2 5.4 L3.2 12 M6.2 5.4 L9.2 12 M4.4 9.4 H8" fill="none" stroke="#cccccc" stroke-width="1"/><circle cx="6.2" cy="4.6" r="1" fill="#cccccc"/><path d="M3.7 2.2 A3.4 3.4 0 0 0 3.7 7 M8.7 2.2 A3.4 3.4 0 0 1 8.7 7 M1.9 0.8 A5.6 5.6 0 0 0 1.9 8.4 M10.5 0.8 A5.6 5.6 0 0 1 10.5 8.4" fill="none" stroke="#cccccc" stroke-width="0.95"/></svg>
<span style='left:115.5px;top:817px;font-size:11.3px;line-height:16px;color:#cccccc;letter-spacing:-0.194px;'>0</span>
<span style='left:1015.3px;top:817px;font-size:11.3px;line-height:16px;color:#cccccc;letter-spacing:-0.404px;'>Ln 1, Col 1</span>
<span style='left:1080.4px;top:817px;font-size:11.3px;line-height:16px;color:#cccccc;letter-spacing:-0.627px;'>Spaces: 2</span>
<span style='left:1139.8px;top:817px;font-size:11.3px;line-height:16px;color:#cccccc;letter-spacing:-0.581px;'>UTF-8</span>
<span style='left:1183.4px;top:817px;font-size:11.3px;line-height:16px;color:#cccccc;letter-spacing:-1.148px;'>LF</span>
<span style='left:1204.2px;top:817px;font-size:11.3px;line-height:16px;color:#cccccc;letter-spacing:-0.664px;'>HTML</span>
<span style='left:1245.5px;top:817px;font-size:11.3px;line-height:16px;color:#cccccc;letter-spacing:-0.351px;'>Trial</span>
<span style='left:1279.5px;top:817px;font-size:11.3px;line-height:16px;color:#cccccc;letter-spacing:-0.155px;'>Windsurf Settings</span>
<svg style="left:1381.4px;top:819.6px;" width="11.4" height="12.6" viewBox="0 0 11.4 12.6"><path d="M5.7 1 C3.4 1 2.4 2.8 2.4 4.8 V7.4 L1 9.4 H10.4 L9 7.4 V4.8 C9 2.8 8 1 5.7 1 Z" fill="none" stroke="#cccccc" stroke-width="1.05" stroke-linejoin="round"/><path d="M4.4 10.6 Q5.7 12.2 7 10.6" fill="none" stroke="#cccccc" stroke-width="1"/></svg>
</footer>
<header class="titlebar window-controls" aria-label="Window controls">
<svg style="left:9.2px;top:7.9px;" width="14.8" height="15.3" viewBox="0 0 14.8 15.3"><rect x="0" y="0" width="14.8" height="15.3" rx="1.5" fill="#141414"/><path d="M3.6 3.5 Q7.6 2.6 9.9 6.2 M4.4 7 Q7.8 6.2 10 9.4 M5.2 10.2 Q8 9.6 10 12.6" fill="none" stroke="#5cc6ee" stroke-width="1.7" stroke-linecap="round"/></svg>
<svg style="left:566.4px;top:7.4px;" width="15" height="15" viewBox="0 0 15 15"><circle cx="9" cy="5.8" r="4.6" fill="none" stroke="#d0d0d0" stroke-width="1.2"/><path d="M5.8 9.2 L0.8 14.4" stroke="#d0d0d0" stroke-width="1.3"/></svg>
<svg style="left:1166px;top:9.2px;" width="14.2" height="12.8" viewBox="0 0 14.2 12.8"><rect x="0.7" y="0.7" width="12.8" height="11.4" rx="1.4" fill="none" stroke="#d4d4d4" stroke-width="1.2"/><rect x="1.2" y="1.2" width="5.4" height="10.4" fill="#d4d4d4"/></svg>
<svg style="left:1189.6px;top:9.2px;" width="14.2" height="12.8" viewBox="0 0 14.2 12.8"><rect x="0.7" y="0.7" width="12.8" height="11.4" rx="1.4" fill="none" stroke="#d4d4d4" stroke-width="1.2"/><path d="M0.7 8 H13.5" stroke="#d4d4d4" stroke-width="1.2"/></svg>
<svg style="left:1214.4px;top:9.2px;" width="13.6" height="12.8" viewBox="0 0 13.6 12.8"><rect x="0.7" y="0.7" width="5" height="11.4" rx="1.2" fill="none" stroke="#d4d4d4" stroke-width="1.2"/><rect x="8.4" y="0.7" width="4.4" height="4.2" rx="1.2" fill="none" stroke="#d4d4d4" stroke-width="1.2"/><rect x="8.4" y="7.6" width="4.4" height="4.5" rx="1.2" fill="none" stroke="#d4d4d4" stroke-width="1.2"/></svg>
<div style="left:1234.3px;top:5.7px;width:20.8px;height:20.2px;background:#5c5c5c;border-radius:4.5px;"></div>
<svg style="left:1237.6px;top:8.6px;" width="14.4" height="14.4" viewBox="0 0 14.4 14.4"><circle cx="7.6" cy="7" r="4.4" fill="none" stroke="#ffffff" stroke-width="1.3"/><path d="M3.4 2.4 A6.6 6.6 0 0 0 3.2 11.6 M2.6 12.2 A6.8 6.8 0 0 0 12.4 11.6" fill="none" stroke="#ffffff" stroke-width="1.2" stroke-linecap="round"/></svg>
<svg style="left:1260.6px;top:7.6px;" width="15.6" height="15.6" viewBox="0 0 15.6 15.6"><circle cx="7.8" cy="7.8" r="7" fill="none" stroke="#d4d4d4" stroke-width="1.15"/><circle cx="7.8" cy="6" r="2.7" fill="none" stroke="#d4d4d4" stroke-width="1.15"/><path d="M3 12.8 Q3.6 9.4 7.8 9.4 Q12 9.4 12.6 12.8" fill="none" stroke="#d4d4d4" stroke-width="1.15"/></svg>
<div style="left:1297px;top:15.4px;width:10.2px;height:1.1px;background:#c8c8c8;"></div>
<svg style="left:1337.6px;top:10.2px;" width="11.4" height="11" viewBox="0 0 11.4 11"><rect x="0.6" y="2.6" width="7.8" height="7.8" rx="1.6" fill="none" stroke="#b8b8b8" stroke-width="1.1"/><path d="M2.8 2.4 V2 Q2.8 0.6 4.2 0.6 H9.2 Q10.8 0.6 10.8 2.2 V7 Q10.8 8.4 9.4 8.4 H8.6" fill="none" stroke="#b8b8b8" stroke-width="1.1"/></svg>
<svg style="left:1380.6px;top:10.8px;" width="10.4" height="10.4" viewBox="0 0 10.4 10.4"><path d="M0.5 0.5 L9.9 9.9 M9.9 0.5 L0.5 9.9" stroke="#d8d8d8" stroke-width="1.1" fill="none"/></svg>
</header>
<nav class="activitybar" aria-label="Activity bar">
<div style="left:6px;top:37px;width:27px;height:28px;background:#2a2a2a;border-radius:5px;"></div>
<svg style="left:11px;top:42.6px;" width="17" height="18" viewBox="0 0 17 18"><path d="M6 1 H11.6 L15.6 5 V12.6 H6 Z M11.4 1.2 V5.2 H15.4" fill="none" stroke="#e0e0e0" stroke-width="1.25" stroke-linejoin="round"/><path d="M6 4.6 H1.6 V16.8 H10.6 V12.8" fill="none" stroke="#e0e0e0" stroke-width="1.25" stroke-linejoin="round"/></svg>
<svg style="left:10.6px;top:80px;" width="17" height="18" viewBox="0 0 17 18"><circle cx="10.6" cy="6.6" r="5.2" fill="none" stroke="#8a8a8a" stroke-width="1.3"/><path d="M7 10.6 L1 17.2" stroke="#8a8a8a" stroke-width="1.4"/></svg>
<svg style="left:11.6px;top:118.6px;" width="15" height="18" viewBox="0 0 15 18"><circle cx="3.4" cy="3" r="2.1" fill="none" stroke="#8a8a8a" stroke-width="1.2"/><circle cx="3.4" cy="15" r="2.1" fill="none" stroke="#8a8a8a" stroke-width="1.2"/><circle cx="11.4" cy="5.8" r="2.1" fill="none" stroke="#8a8a8a" stroke-width="1.2"/><path d="M3.4 5.1 V12.9 M11.4 7.9 Q11.4 10.6 8 10.8 Q3.6 11 3.4 12.9" fill="none" stroke="#8a8a8a" stroke-width="1.2"/></svg>
<svg style="left:9.6px;top:157px;" width="19" height="18" viewBox="0 0 19 18"><path d="M7.2 1.4 L17.6 8.2 L10.6 12.8 M7.2 1.4 V6.4" fill="none" stroke="#8a8a8a" stroke-width="1.25" stroke-linejoin="round"/><circle cx="5.4" cy="12.4" r="3" fill="none" stroke="#8a8a8a" stroke-width="1.2"/><path d="M5.4 9.4 V8 M2.4 12.4 H0.6 M8.4 12.4 H10.2 M3.2 10.2 L1.8 8.8 M7.6 10.2 L9 8.8 M3.2 14.6 L1.8 16.2 M7.6 14.6 L9 16.2" fill="none" stroke="#8a8a8a" stroke-width="1"/></svg>
<svg style="left:10.6px;top:196.4px;" width="18" height="17" viewBox="0 0 18 17"><path d="M9 11.6 H1 V1 H14.6 V5.4" fill="none" stroke="#8a8a8a" stroke-width="1.25" stroke-linejoin="round"/><path d="M3.4 14.6 H8" stroke="#8a8a8a" stroke-width="1.25"/><circle cx="13" cy="11.4" r="4.2" fill="none" stroke="#8a8a8a" stroke-width="1.15"/><path d="M11.2 10.2 L12.4 11.4 L11.2 12.6 M14.8 10 L13.6 11.2 L14.8 12.4" fill="none" stroke="#8a8a8a" stroke-width="0.8"/></svg>
<svg style="left:10.6px;top:234.6px;" width="18" height="18" viewBox="0 0 18 18"><path d="M1 4.8 H7.2 V16.8 H1 Z M7.2 10.8 H13.2 V16.8 H7.2 M1 10.8 H7.2" fill="none" stroke="#8a8a8a" stroke-width="1.25" stroke-linejoin="round"/><rect x="10" y="1.2" width="6" height="6" fill="none" stroke="#8a8a8a" stroke-width="1.25"/></svg>
<div style="left:20px;top:246px;width:11.6px;height:9.6px;background:#0078d4;border-radius:2.5px;"></div>
<span style='left:23.4px;top:242px;font-size:8.99px;line-height:16px;color:#ffffff;font-weight:700;letter-spacing:0.001px;'>2</span>
</nav>
<section class="explorer-actions" aria-label="Explorer actions">
<svg style="left:187.2px;top:66.6px;" width="14" height="15" viewBox="0 0 14 15"><path d="M8.4 12.4 H1.6 Q0.9 12.4 0.9 11.7 V1.6 Q0.9 0.9 1.6 0.9 H6.4 L10 4.5 V7 M6.2 1 V4.6 H9.8" fill="none" stroke="#e0e0e0" stroke-width="1.25" stroke-linejoin="round"/><path d="M10.6 8.4 V14 M7.8 11.2 H13.4" stroke="#e0e0e0" stroke-width="1.25"/></svg>
<svg style="left:208.4px;top:66.6px;" width="15" height="15" viewBox="0 0 15 15"><path d="M8 12.2 H0.9 V1.4 H5.2 L6.6 3 H13 V7.2" fill="none" stroke="#e0e0e0" stroke-width="1.25" stroke-linejoin="round"/><path d="M0.9 4.8 H5.4 L6.6 3.4" fill="none" stroke="#e0e0e0" stroke-width="1.1"/><path d="M11.4 8.4 V14 M8.6 11.2 H14.2" stroke="#e0e0e0" stroke-width="1.25"/></svg>
<svg style="left:230.4px;top:67.4px;" width="14" height="14" viewBox="0 0 14 14"><path d="M3.2 3.6 A5.3 5.3 0 1 1 1.6 7.4" fill="none" stroke="#e0e0e0" stroke-width="1.25"/><path d="M2.4 0.6 V4.2 H6" fill="none" stroke="#e0e0e0" stroke-width="1.2"/></svg>
<svg style="left:252.8px;top:67.6px;" width="13" height="13.4" viewBox="0 0 13 13.4"><rect x="0.7" y="3.8" width="8.4" height="8.6" rx="1.6" fill="none" stroke="#e0e0e0" stroke-width="1.2"/><path d="M3.4 3.6 V2.2 Q3.4 0.7 4.9 0.7 H10.6 Q12.2 0.7 12.2 2.2 V8 Q12.2 9.6 10.6 9.6 H9.3" fill="none" stroke="#e0e0e0" stroke-width="1.2"/><path d="M2.8 8.1 H7" stroke="#e0e0e0" stroke-width="1.2"/></svg>
</section>
</div></body></html>
